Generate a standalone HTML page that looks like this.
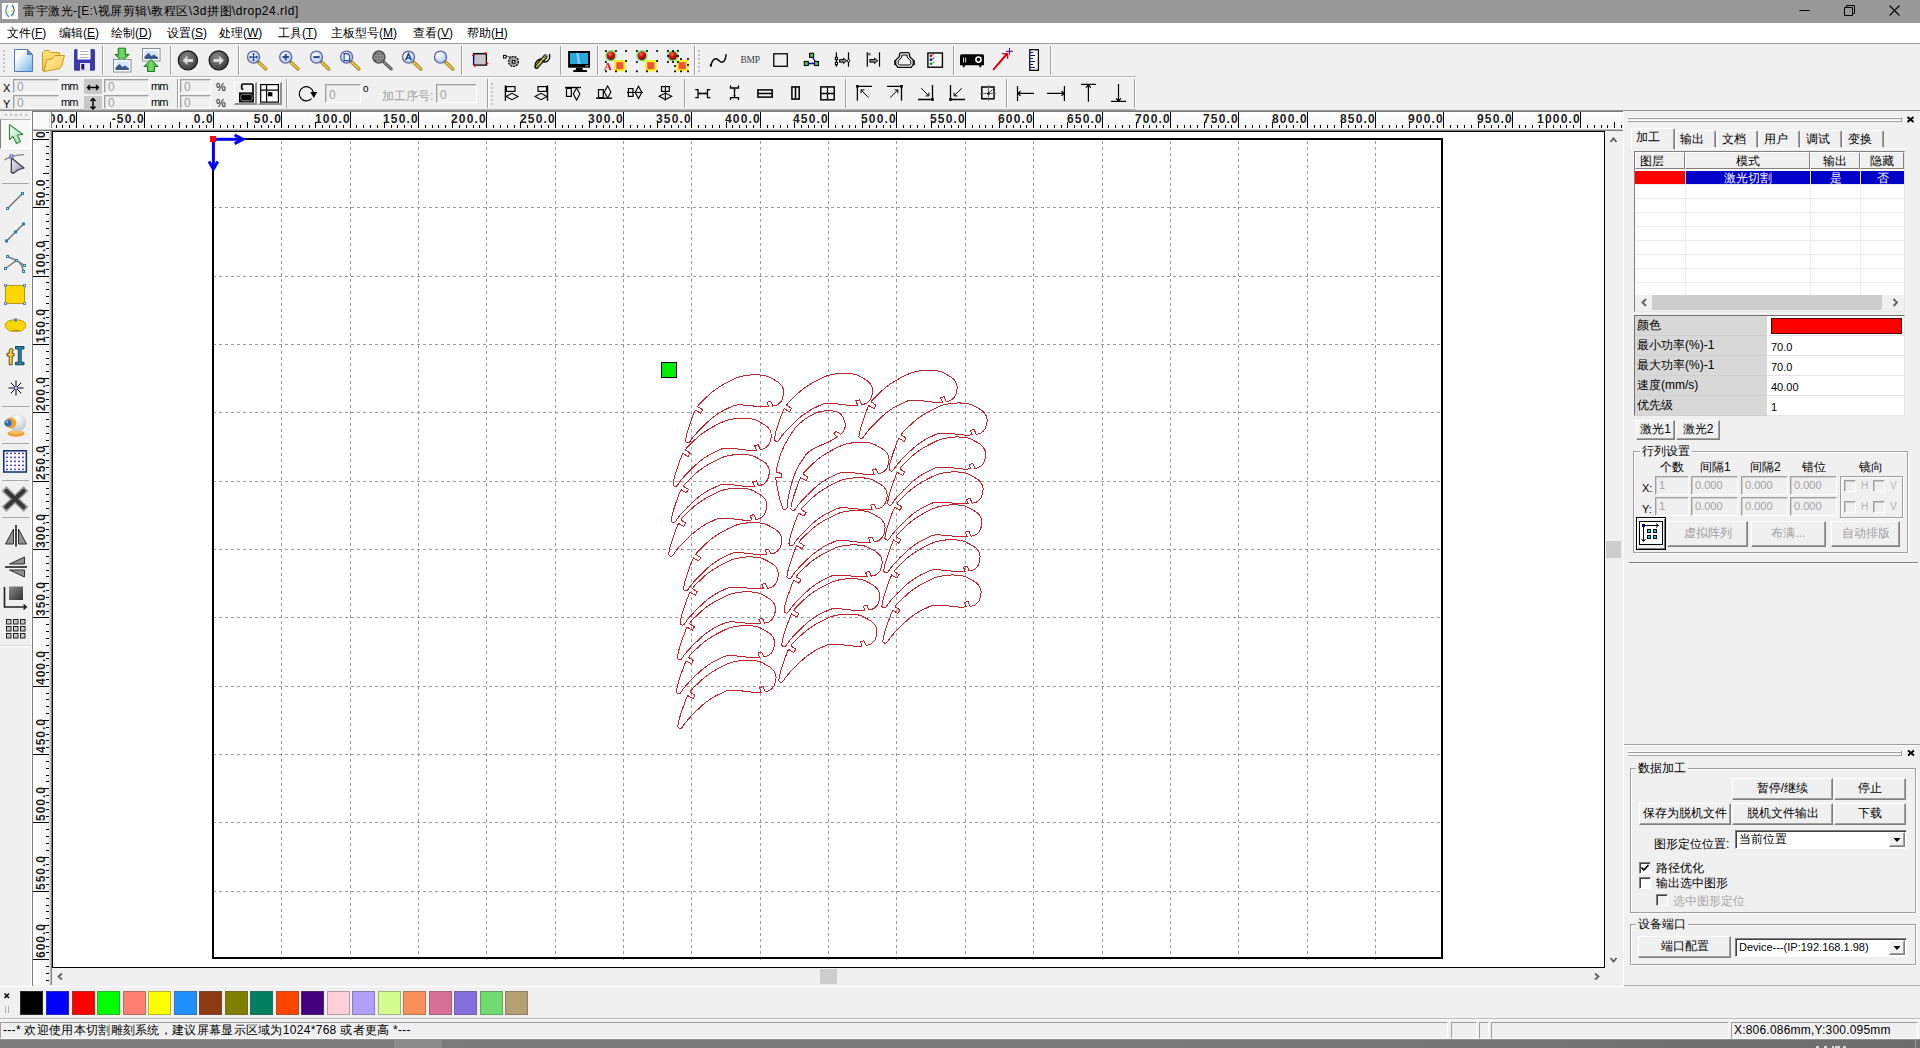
<!DOCTYPE html>
<html><head><meta charset="utf-8"><title>RDWorks</title><style>
html,body{margin:0;padding:0}
body{width:1920px;height:1048px;position:relative;overflow:hidden;background:#f0f0f0;font-family:"Liberation Sans",sans-serif;font-size:12px;color:#000}
body div{position:absolute;overflow:visible}
.t{white-space:nowrap}
.rl{font-weight:bold;font-size:12px;line-height:15px;letter-spacing:1.2px;color:#222;white-space:nowrap;text-align:right;margin-right:-1px}
.rv{font-weight:bold;font-size:12px;line-height:15px;letter-spacing:1.0px;color:#222;white-space:nowrap;transform-origin:0 0;transform:rotate(-90deg);height:15px}
svg{position:absolute;left:0;top:0;pointer-events:none}
u{text-decoration:underline}
</style></head>
<body>
<div style="left:0px;top:0px;width:1920px;height:23px;background:#999999"></div>
<div style="left:2px;top:3px;width:16px;height:16px;background:#fff"></div>
<div class="t" style="left:23px;top:3px;font-size:12px;line-height:16px;color:#000;letter-spacing:0.5px">雷宇激光-[E:\视屏剪辑\教程区\3d拼图\drop24.rld]</div>
<div style="left:0px;top:23px;width:1920px;height:20px;background:#ffffff"></div>
<div class="t" style="left:7px;top:25px;font-size:12px;line-height:16px;color:#000">文件(<u>F</u>)</div>
<div class="t" style="left:59px;top:25px;font-size:12px;line-height:16px;color:#000">编辑(<u>E</u>)</div>
<div class="t" style="left:111px;top:25px;font-size:12px;line-height:16px;color:#000">绘制(<u>D</u>)</div>
<div class="t" style="left:167px;top:25px;font-size:12px;line-height:16px;color:#000">设置(<u>S</u>)</div>
<div class="t" style="left:219px;top:25px;font-size:12px;line-height:16px;color:#000">处理(<u>W</u>)</div>
<div class="t" style="left:278px;top:25px;font-size:12px;line-height:16px;color:#000">工具(<u>T</u>)</div>
<div class="t" style="left:331px;top:25px;font-size:12px;line-height:16px;color:#000">主板型号(<u>M</u>)</div>
<div class="t" style="left:413px;top:25px;font-size:12px;line-height:16px;color:#000">查看(<u>V</u>)</div>
<div class="t" style="left:467px;top:25px;font-size:12px;line-height:16px;color:#000">帮助(<u>H</u>)</div>
<div style="left:0px;top:43px;width:1920px;height:1px;background:#a0a0a0"></div>
<div style="left:0px;top:76px;width:1136px;height:1px;background:#b9b9b9"></div>
<div style="left:0px;top:77px;width:1136px;height:1px;background:#ffffff"></div>
<div style="left:0px;top:109px;width:1136px;height:1px;background:#b4b4b4"></div>
<div style="left:0px;top:110px;width:1920px;height:1px;background:#929292"></div>
<div style="left:102px;top:46px;width:1px;height:29px;background:#a0a0a0"></div>
<div style="left:103px;top:46px;width:1px;height:29px;background:#ffffff"></div>
<div style="left:170px;top:46px;width:1px;height:29px;background:#a0a0a0"></div>
<div style="left:171px;top:46px;width:1px;height:29px;background:#ffffff"></div>
<div style="left:238px;top:46px;width:1px;height:29px;background:#a0a0a0"></div>
<div style="left:239px;top:46px;width:1px;height:29px;background:#ffffff"></div>
<div style="left:461px;top:46px;width:1px;height:29px;background:#a0a0a0"></div>
<div style="left:462px;top:46px;width:1px;height:29px;background:#ffffff"></div>
<div style="left:560px;top:46px;width:1px;height:29px;background:#a0a0a0"></div>
<div style="left:561px;top:46px;width:1px;height:29px;background:#ffffff"></div>
<div style="left:597px;top:46px;width:1px;height:29px;background:#a0a0a0"></div>
<div style="left:598px;top:46px;width:1px;height:29px;background:#ffffff"></div>
<div style="left:694px;top:46px;width:1px;height:29px;background:#a0a0a0"></div>
<div style="left:695px;top:46px;width:1px;height:29px;background:#ffffff"></div>
<div style="left:953px;top:46px;width:1px;height:29px;background:#a0a0a0"></div>
<div style="left:954px;top:46px;width:1px;height:29px;background:#ffffff"></div>
<div style="left:1050px;top:46px;width:1px;height:29px;background:#a0a0a0"></div>
<div style="left:1051px;top:46px;width:1px;height:29px;background:#ffffff"></div>
<div style="left:177px;top:79px;width:1px;height:29px;background:#a0a0a0"></div>
<div style="left:178px;top:79px;width:1px;height:29px;background:#ffffff"></div>
<div style="left:286px;top:79px;width:1px;height:29px;background:#a0a0a0"></div>
<div style="left:287px;top:79px;width:1px;height:29px;background:#ffffff"></div>
<div style="left:487px;top:79px;width:1px;height:29px;background:#a0a0a0"></div>
<div style="left:488px;top:79px;width:1px;height:29px;background:#ffffff"></div>
<div style="left:684px;top:79px;width:1px;height:29px;background:#a0a0a0"></div>
<div style="left:685px;top:79px;width:1px;height:29px;background:#ffffff"></div>
<div style="left:845px;top:79px;width:1px;height:29px;background:#a0a0a0"></div>
<div style="left:846px;top:79px;width:1px;height:29px;background:#ffffff"></div>
<div style="left:1006px;top:79px;width:1px;height:29px;background:#a0a0a0"></div>
<div style="left:1007px;top:79px;width:1px;height:29px;background:#ffffff"></div>
<div style="left:1134px;top:79px;width:1px;height:29px;background:#a0a0a0"></div>
<div style="left:1135px;top:79px;width:1px;height:29px;background:#ffffff"></div>
<div style="left:3px;top:50px;width:2px;height:2px;background:#c4c4c4"></div>
<div style="left:3px;top:54px;width:2px;height:2px;background:#c4c4c4"></div>
<div style="left:3px;top:58px;width:2px;height:2px;background:#c4c4c4"></div>
<div style="left:3px;top:62px;width:2px;height:2px;background:#c4c4c4"></div>
<div style="left:3px;top:66px;width:2px;height:2px;background:#c4c4c4"></div>
<div style="left:3px;top:70px;width:2px;height:2px;background:#c4c4c4"></div>
<div style="left:698px;top:50px;width:2px;height:2px;background:#c4c4c4"></div>
<div style="left:698px;top:54px;width:2px;height:2px;background:#c4c4c4"></div>
<div style="left:698px;top:58px;width:2px;height:2px;background:#c4c4c4"></div>
<div style="left:698px;top:62px;width:2px;height:2px;background:#c4c4c4"></div>
<div style="left:698px;top:66px;width:2px;height:2px;background:#c4c4c4"></div>
<div style="left:698px;top:70px;width:2px;height:2px;background:#c4c4c4"></div>
<div style="left:491px;top:83px;width:2px;height:2px;background:#c4c4c4"></div>
<div style="left:491px;top:87px;width:2px;height:2px;background:#c4c4c4"></div>
<div style="left:491px;top:91px;width:2px;height:2px;background:#c4c4c4"></div>
<div style="left:491px;top:95px;width:2px;height:2px;background:#c4c4c4"></div>
<div style="left:491px;top:99px;width:2px;height:2px;background:#c4c4c4"></div>
<div style="left:491px;top:103px;width:2px;height:2px;background:#c4c4c4"></div>
<div class="t" style="left:3px;top:81px;font-size:11px;line-height:14px">X</div>
<div class="t" style="left:3px;top:97px;font-size:11px;line-height:14px">Y</div>
<div style="left:13px;top:79px;width:46px;height:14px;background:#f0f0f0;border:1px solid;border-color:#a0a0a0 #fff #fff #a0a0a0;box-sizing:border-box;box-shadow:inset 1px 1px 0 #d4d4d4;color:#a0a0a0;font-size:12px;line-height:15px;padding-left:3px">0</div>
<div class="t" style="left:61px;top:79px;font-size:11px;line-height:14px;letter-spacing:-1px">mm</div>
<div style="left:104px;top:79px;width:45px;height:14px;background:#f0f0f0;border:1px solid;border-color:#a0a0a0 #fff #fff #a0a0a0;box-sizing:border-box;box-shadow:inset 1px 1px 0 #d4d4d4;color:#a0a0a0;font-size:12px;line-height:15px;padding-left:3px">0</div>
<div class="t" style="left:151px;top:79px;font-size:11px;line-height:14px;letter-spacing:-1px">mm</div>
<div style="left:180px;top:79px;width:31px;height:14px;background:#f0f0f0;border:1px solid;border-color:#a0a0a0 #fff #fff #a0a0a0;box-sizing:border-box;box-shadow:inset 1px 1px 0 #d4d4d4;color:#a0a0a0;font-size:12px;line-height:15px;padding-left:3px">0</div>
<div class="t" style="left:216px;top:80px;font-size:11px;line-height:14px">%</div>
<div style="left:13px;top:95px;width:46px;height:14px;background:#f0f0f0;border:1px solid;border-color:#a0a0a0 #fff #fff #a0a0a0;box-sizing:border-box;box-shadow:inset 1px 1px 0 #d4d4d4;color:#a0a0a0;font-size:12px;line-height:15px;padding-left:3px">0</div>
<div class="t" style="left:61px;top:95px;font-size:11px;line-height:14px;letter-spacing:-1px">mm</div>
<div style="left:104px;top:95px;width:45px;height:14px;background:#f0f0f0;border:1px solid;border-color:#a0a0a0 #fff #fff #a0a0a0;box-sizing:border-box;box-shadow:inset 1px 1px 0 #d4d4d4;color:#a0a0a0;font-size:12px;line-height:15px;padding-left:3px">0</div>
<div class="t" style="left:151px;top:95px;font-size:11px;line-height:14px;letter-spacing:-1px">mm</div>
<div style="left:180px;top:95px;width:31px;height:14px;background:#f0f0f0;border:1px solid;border-color:#a0a0a0 #fff #fff #a0a0a0;box-sizing:border-box;box-shadow:inset 1px 1px 0 #d4d4d4;color:#a0a0a0;font-size:12px;line-height:15px;padding-left:3px">0</div>
<div class="t" style="left:216px;top:96px;font-size:11px;line-height:14px">%</div>
<div style="left:84px;top:79px;width:18px;height:15px;background:#c8c8c8"></div>
<div style="left:84px;top:96px;width:18px;height:14px;background:#c8c8c8"></div>
<div style="left:234px;top:82px;width:23px;height:23px;background:#f0f0f0;box-sizing:border-box;border:solid;border-width:1px 2px 2px 1px;border-color:#fff #909090 #909090 #fff"></div>
<div style="left:258px;top:82px;width:24px;height:23px;background:#f0f0f0;box-sizing:border-box;border:solid;border-width:1px 2px 2px 1px;border-color:#fff #909090 #909090 #fff"></div>
<div style="left:325px;top:84px;width:36px;height:19px;background:#f0f0f0;border:1px solid;border-color:#a0a0a0 #fff #fff #a0a0a0;box-sizing:border-box;box-shadow:inset 1px 1px 0 #d4d4d4;color:#a0a0a0;font-size:12px;line-height:20px;padding-left:3px">0</div>
<div class="t" style="left:363px;top:82px;font-size:10px;line-height:14px">o</div>
<div class="t" style="left:382px;top:88px;font-size:12px;line-height:16px;color:#a0a0a0">加工序号:</div>
<div style="left:436px;top:84px;width:41px;height:19px;background:#f0f0f0;border:1px solid;border-color:#a0a0a0 #fff #fff #a0a0a0;box-sizing:border-box;box-shadow:inset 1px 1px 0 #d4d4d4;color:#a0a0a0;font-size:12px;line-height:20px;padding-left:3px">0</div>
<div style="left:31px;top:111px;width:1px;height:875px;background:#ffffff"></div>
<div style="left:32px;top:111px;width:1px;height:875px;background:#808080"></div>
<div style="left:33px;top:112px;width:16px;height:16px;background:#fafafa"></div>
<div style="left:32px;top:111px;width:1591px;height:1px;background:#7a7a7a"></div>
<div style="left:49px;top:112px;width:1px;height:17px;background:#dcdcdc"></div>
<div style="left:50px;top:112px;width:1px;height:17px;background:#ffffff"></div>
<div style="left:51px;top:112px;width:1px;height:17px;background:#808080"></div>
<div style="left:52px;top:112px;width:1570px;height:16px;background:linear-gradient(#ffffff,#f4f4f4)"></div>
<div style="left:33px;top:128px;width:1590px;height:1px;background:#ffffff"></div>
<div style="left:33px;top:129px;width:1590px;height:1px;background:#c0c0c0"></div>
<div style="left:33px;top:130px;width:1590px;height:1px;background:#7f7f7f"></div>
<div style="left:33px;top:131px;width:16px;height:854px;background:linear-gradient(90deg,#ffffff,#f4f4f4)"></div>
<div style="left:49px;top:131px;width:1px;height:854px;background:#e0e0e0"></div>
<div style="left:50px;top:131px;width:1px;height:854px;background:#c0c0c0"></div>
<div style="left:51px;top:131px;width:1px;height:854px;background:#7f7f7f"></div>
<div style="left:52px;top:111px;width:1570px;height:17px;overflow:hidden"><div class="rl" style="right:1546px;top:1px">-100.0</div><div class="rl" style="right:1478px;top:1px">-50.0</div><div class="rl" style="right:1409px;top:1px">0.0</div><div class="rl" style="right:1341px;top:1px">50.0</div><div class="rl" style="right:1272px;top:1px">100.0</div><div class="rl" style="right:1204px;top:1px">150.0</div><div class="rl" style="right:1136px;top:1px">200.0</div><div class="rl" style="right:1067px;top:1px">250.0</div><div class="rl" style="right:999px;top:1px">300.0</div><div class="rl" style="right:931px;top:1px">350.0</div><div class="rl" style="right:862px;top:1px">400.0</div><div class="rl" style="right:794px;top:1px">450.0</div><div class="rl" style="right:726px;top:1px">500.0</div><div class="rl" style="right:657px;top:1px">550.0</div><div class="rl" style="right:589px;top:1px">600.0</div><div class="rl" style="right:520px;top:1px">650.0</div><div class="rl" style="right:452px;top:1px">700.0</div><div class="rl" style="right:384px;top:1px">750.0</div><div class="rl" style="right:315px;top:1px">800.0</div><div class="rl" style="right:247px;top:1px">850.0</div><div class="rl" style="right:179px;top:1px">900.0</div><div class="rl" style="right:110px;top:1px">950.0</div><div class="rl" style="right:42px;top:1px">1000.0</div></div>
<div style="left:33px;top:131px;width:16px;height:854px;overflow:hidden"><div class="rv" style="left:1px;top:7px">0</div><div class="rv" style="left:1px;top:75px">50.0</div><div class="rv" style="left:1px;top:144px">100.0</div><div class="rv" style="left:1px;top:212px">150.0</div><div class="rv" style="left:1px;top:280px">200.0</div><div class="rv" style="left:1px;top:349px">250.0</div><div class="rv" style="left:1px;top:417px">300.0</div><div class="rv" style="left:1px;top:485px">350.0</div><div class="rv" style="left:1px;top:554px">400.0</div><div class="rv" style="left:1px;top:622px">450.0</div><div class="rv" style="left:1px;top:690px">500.0</div><div class="rv" style="left:1px;top:759px">550.0</div><div class="rv" style="left:1px;top:827px">600.0</div></div>
<div style="left:52px;top:131px;width:1553px;height:837px;background:#fff;border:1px solid #000;box-sizing:border-box"></div>
<div style="left:1605px;top:131px;width:17px;height:837px;background:#f0f0f0"></div>
<div style="left:1606px;top:541px;width:15px;height:17px;background:#cdcdcd"></div>
<div style="left:52px;top:968px;width:1570px;height:17px;background:#f0f0f0"></div>
<div style="left:820px;top:969px;width:17px;height:15px;background:#cdcdcd"></div>
<div style="left:0px;top:986px;width:1623px;height:1px;background:#ffffff"></div>
<div style="left:1623px;top:111px;width:1px;height:875px;background:#ffffff"></div>
<div style="left:1628px;top:117px;width:273px;height:1px;background:#ffffff"></div>
<div style="left:1628px;top:118px;width:273px;height:1px;background:#a0a0a0"></div>
<div style="left:1628px;top:120px;width:273px;height:1px;background:#ffffff"></div>
<div style="left:1628px;top:121px;width:273px;height:1px;background:#a0a0a0"></div>
<div style="left:1901px;top:117px;width:1px;height:5px;background:#a0a0a0"></div>
<div style="left:1631px;top:128px;width:44px;height:22px;background:#f0f0f0;box-sizing:border-box;border:1px solid;border-color:#fff #808080 #f0f0f0 #fff;border-radius:2px 2px 0 0;box-shadow:inset -1px 0 0 #a0a0a0"></div>
<div class="t" style="left:1636px;top:129px;font-size:12px;line-height:16px">加工</div>
<div style="left:1675px;top:130px;width:41px;height:18px;background:#f0f0f0;box-sizing:border-box;border:1px solid;border-color:#fff #808080 #f0f0f0 #fff;border-radius:2px 2px 0 0;box-shadow:inset -1px 0 0 #a0a0a0"></div>
<div class="t" style="left:1680px;top:131px;font-size:12px;line-height:16px">输出</div>
<div style="left:1717px;top:130px;width:41px;height:18px;background:#f0f0f0;box-sizing:border-box;border:1px solid;border-color:#fff #808080 #f0f0f0 #fff;border-radius:2px 2px 0 0;box-shadow:inset -1px 0 0 #a0a0a0"></div>
<div class="t" style="left:1722px;top:131px;font-size:12px;line-height:16px">文档</div>
<div style="left:1759px;top:130px;width:41px;height:18px;background:#f0f0f0;box-sizing:border-box;border:1px solid;border-color:#fff #808080 #f0f0f0 #fff;border-radius:2px 2px 0 0;box-shadow:inset -1px 0 0 #a0a0a0"></div>
<div class="t" style="left:1764px;top:131px;font-size:12px;line-height:16px">用户</div>
<div style="left:1801px;top:130px;width:41px;height:18px;background:#f0f0f0;box-sizing:border-box;border:1px solid;border-color:#fff #808080 #f0f0f0 #fff;border-radius:2px 2px 0 0;box-shadow:inset -1px 0 0 #a0a0a0"></div>
<div class="t" style="left:1806px;top:131px;font-size:12px;line-height:16px">调试</div>
<div style="left:1843px;top:130px;width:41px;height:18px;background:#f0f0f0;box-sizing:border-box;border:1px solid;border-color:#fff #808080 #f0f0f0 #fff;border-radius:2px 2px 0 0;box-shadow:inset -1px 0 0 #a0a0a0"></div>
<div class="t" style="left:1848px;top:131px;font-size:12px;line-height:16px">变换</div>
<div style="left:1675px;top:148px;width:232px;height:1px;background:#ffffff"></div>
<div style="left:1634px;top:151px;width:271px;height:161px;background:#fff;box-sizing:border-box;border:1px solid;border-color:#808080 #e8e8e8 #e8e8e8 #808080"></div>
<div style="left:1635px;top:152px;width:50px;height:17px;background:#f0f0f0;box-sizing:border-box;border:1px solid;border-color:#fff #808080 #808080 #fff;font-size:12px;line-height:16px;text-align:left;padding-left:4px;">图层</div>
<div style="left:1685px;top:152px;width:125px;height:17px;background:#f0f0f0;box-sizing:border-box;border:1px solid;border-color:#fff #808080 #808080 #fff;font-size:12px;line-height:16px;text-align:center;">模式</div>
<div style="left:1810px;top:152px;width:50px;height:17px;background:#f0f0f0;box-sizing:border-box;border:1px solid;border-color:#fff #808080 #808080 #fff;font-size:12px;line-height:16px;text-align:center;">输出</div>
<div style="left:1860px;top:152px;width:44px;height:17px;background:#f0f0f0;box-sizing:border-box;border:1px solid;border-color:#fff #808080 #808080 #fff;font-size:12px;line-height:16px;text-align:center;">隐藏</div>
<div style="left:1635px;top:184px;width:269px;height:1px;background:#ececec"></div>
<div style="left:1635px;top:198px;width:269px;height:1px;background:#ececec"></div>
<div style="left:1635px;top:212px;width:269px;height:1px;background:#ececec"></div>
<div style="left:1635px;top:226px;width:269px;height:1px;background:#ececec"></div>
<div style="left:1635px;top:240px;width:269px;height:1px;background:#ececec"></div>
<div style="left:1635px;top:254px;width:269px;height:1px;background:#ececec"></div>
<div style="left:1635px;top:268px;width:269px;height:1px;background:#ececec"></div>
<div style="left:1635px;top:282px;width:269px;height:1px;background:#ececec"></div>
<div style="left:1635px;top:296px;width:269px;height:1px;background:#ececec"></div>
<div style="left:1685px;top:169px;width:1px;height:126px;background:#ececec"></div>
<div style="left:1810px;top:169px;width:1px;height:126px;background:#ececec"></div>
<div style="left:1860px;top:169px;width:1px;height:126px;background:#ececec"></div>
<div style="left:1635px;top:171px;width:50px;height:13px;background:#ff0000"></div>
<div style="left:1686px;top:171px;width:124px;height:13px;background:#0000c8;color:#fff;font-size:12px;line-height:14px;text-align:center;overflow:hidden">激光切割</div>
<div style="left:1811px;top:171px;width:49px;height:13px;background:#0000c8;color:#fff;font-size:12px;line-height:14px;text-align:center;overflow:hidden">是</div>
<div style="left:1861px;top:171px;width:43px;height:13px;background:#0000c8;color:#fff;font-size:12px;line-height:14px;text-align:center;overflow:hidden">否</div>
<div style="left:1635px;top:295px;width:269px;height:16px;background:#f0f0f0"></div>
<div style="left:1652px;top:295px;width:230px;height:15px;background:#cdcdcd"></div>
<div style="left:1634px;top:315px;width:271px;height:101px;background:#fff;box-sizing:border-box;border:1px solid;border-color:#707070 #e8e8e8 #e8e8e8 #707070"></div>
<div style="left:1635px;top:316px;width:132px;height:19px;background:#d8d8d8;font-size:12px;line-height:19px;padding-left:2px;box-sizing:border-box;white-space:nowrap">颜色</div>
<div style="left:1635px;top:335px;width:132px;height:1px;background:#d0d0d0"></div>
<div style="left:1768px;top:335px;width:136px;height:1px;background:#e4e4e4"></div>
<div style="left:1635px;top:336px;width:132px;height:19px;background:#d8d8d8;font-size:12px;line-height:19px;padding-left:2px;box-sizing:border-box;white-space:nowrap">最小功率(%)-1</div>
<div style="left:1635px;top:355px;width:132px;height:1px;background:#d0d0d0"></div>
<div style="left:1768px;top:355px;width:136px;height:1px;background:#e4e4e4"></div>
<div class="t" style="left:1771px;top:340px;font-size:11px;line-height:14px">70.0</div>
<div style="left:1635px;top:356px;width:132px;height:19px;background:#d8d8d8;font-size:12px;line-height:19px;padding-left:2px;box-sizing:border-box;white-space:nowrap">最大功率(%)-1</div>
<div style="left:1635px;top:375px;width:132px;height:1px;background:#d0d0d0"></div>
<div style="left:1768px;top:375px;width:136px;height:1px;background:#e4e4e4"></div>
<div class="t" style="left:1771px;top:360px;font-size:11px;line-height:14px">70.0</div>
<div style="left:1635px;top:376px;width:132px;height:19px;background:#d8d8d8;font-size:12px;line-height:19px;padding-left:2px;box-sizing:border-box;white-space:nowrap">速度(mm/s)</div>
<div style="left:1635px;top:395px;width:132px;height:1px;background:#d0d0d0"></div>
<div style="left:1768px;top:395px;width:136px;height:1px;background:#e4e4e4"></div>
<div class="t" style="left:1771px;top:380px;font-size:11px;line-height:14px">40.00</div>
<div style="left:1635px;top:396px;width:132px;height:19px;background:#d8d8d8;font-size:12px;line-height:19px;padding-left:2px;box-sizing:border-box;white-space:nowrap">优先级</div>
<div style="left:1635px;top:415px;width:132px;height:1px;background:#d0d0d0"></div>
<div style="left:1768px;top:415px;width:136px;height:1px;background:#e4e4e4"></div>
<div class="t" style="left:1771px;top:400px;font-size:11px;line-height:14px">1</div>
<div style="left:1771px;top:318px;width:131px;height:16px;background:#ff0000;box-sizing:border-box;border:1px solid #500000"></div>
<div style="left:1636px;top:420px;width:39px;height:20px;background:#f0f0f0;box-sizing:border-box;border:1px solid;border-color:#fff #808080 #808080 #fff;box-shadow:inset -1px -1px 0 #a0a0a0;text-align:center;font-size:12px;line-height:17px;color:#000;white-space:nowrap;overflow:hidden">激光1</div>
<div style="left:1676px;top:420px;width:44px;height:20px;background:#f0f0f0;box-sizing:border-box;border:1px solid;border-color:#fff #808080 #808080 #fff;box-shadow:inset -1px -1px 0 #a0a0a0;text-align:center;font-size:12px;line-height:17px;color:#000;white-space:nowrap;overflow:hidden">激光2</div>
<div style="left:1633px;top:451px;width:275px;height:102px;box-sizing:border-box;border:1px solid #a0a0a0;box-shadow:inset 1px 1px 0 #fff, 1px 1px 0 #fff"></div>
<div class="t" style="left:1640px;top:444px;font-size:12px;line-height:14px;background:#f0f0f0;padding:0 2px">行列设置</div>
<div class="t" style="left:1660px;top:460px;font-size:12px;line-height:14px">个数</div>
<div class="t" style="left:1700px;top:460px;font-size:12px;line-height:14px">间隔1</div>
<div class="t" style="left:1750px;top:460px;font-size:12px;line-height:14px">间隔2</div>
<div class="t" style="left:1802px;top:460px;font-size:12px;line-height:14px">错位</div>
<div class="t" style="left:1859px;top:460px;font-size:12px;line-height:14px">镜向</div>
<div class="t" style="left:1642px;top:481px;font-size:11px;line-height:14px">X:</div>
<div class="t" style="left:1642px;top:502px;font-size:11px;line-height:14px">Y:</div>
<div style="left:1655px;top:476px;width:34px;height:19px;background:#f0f0f0;box-sizing:border-box;border:1px solid;border-color:#a0a0a0 #fff #fff #a0a0a0;box-shadow:inset 1px 1px 0 #d0d0d0;color:#a0a0a0;font-size:11px;line-height:17px;padding-left:3px">1</div>
<div style="left:1691px;top:476px;width:47px;height:19px;background:#f0f0f0;box-sizing:border-box;border:1px solid;border-color:#a0a0a0 #fff #fff #a0a0a0;box-shadow:inset 1px 1px 0 #d0d0d0;color:#a0a0a0;font-size:11px;line-height:17px;padding-left:3px">0.000</div>
<div style="left:1741px;top:476px;width:47px;height:19px;background:#f0f0f0;box-sizing:border-box;border:1px solid;border-color:#a0a0a0 #fff #fff #a0a0a0;box-shadow:inset 1px 1px 0 #d0d0d0;color:#a0a0a0;font-size:11px;line-height:17px;padding-left:3px">0.000</div>
<div style="left:1790px;top:476px;width:47px;height:19px;background:#f0f0f0;box-sizing:border-box;border:1px solid;border-color:#a0a0a0 #fff #fff #a0a0a0;box-shadow:inset 1px 1px 0 #d0d0d0;color:#a0a0a0;font-size:11px;line-height:17px;padding-left:3px">0.000</div>
<div style="left:1655px;top:497px;width:34px;height:19px;background:#f0f0f0;box-sizing:border-box;border:1px solid;border-color:#a0a0a0 #fff #fff #a0a0a0;box-shadow:inset 1px 1px 0 #d0d0d0;color:#a0a0a0;font-size:11px;line-height:17px;padding-left:3px">1</div>
<div style="left:1691px;top:497px;width:47px;height:19px;background:#f0f0f0;box-sizing:border-box;border:1px solid;border-color:#a0a0a0 #fff #fff #a0a0a0;box-shadow:inset 1px 1px 0 #d0d0d0;color:#a0a0a0;font-size:11px;line-height:17px;padding-left:3px">0.000</div>
<div style="left:1741px;top:497px;width:47px;height:19px;background:#f0f0f0;box-sizing:border-box;border:1px solid;border-color:#a0a0a0 #fff #fff #a0a0a0;box-shadow:inset 1px 1px 0 #d0d0d0;color:#a0a0a0;font-size:11px;line-height:17px;padding-left:3px">0.000</div>
<div style="left:1790px;top:497px;width:47px;height:19px;background:#f0f0f0;box-sizing:border-box;border:1px solid;border-color:#a0a0a0 #fff #fff #a0a0a0;box-shadow:inset 1px 1px 0 #d0d0d0;color:#a0a0a0;font-size:11px;line-height:17px;padding-left:3px">0.000</div>
<div style="left:1840px;top:476px;width:63px;height:42px;box-sizing:border-box;border:1px solid #a0a0a0;box-shadow:inset 1px 1px 0 #fff,1px 1px 0 #fff"></div>
<div style="left:1844px;top:480px;width:12px;height:12px;background:#f0f0f0;box-sizing:border-box;border:1px solid;border-color:#a0a0a0 #fff #fff #a0a0a0;box-shadow:inset 1px 1px 0 #c8c8c8"></div>
<div class="t" style="left:1861px;top:479px;font-size:10px;line-height:14px;color:#b4b4b4">H</div>
<div style="left:1873px;top:480px;width:12px;height:12px;background:#f0f0f0;box-sizing:border-box;border:1px solid;border-color:#a0a0a0 #fff #fff #a0a0a0;box-shadow:inset 1px 1px 0 #c8c8c8"></div>
<div class="t" style="left:1890px;top:479px;font-size:10px;line-height:14px;color:#b4b4b4">V</div>
<div style="left:1844px;top:501px;width:12px;height:12px;background:#f0f0f0;box-sizing:border-box;border:1px solid;border-color:#a0a0a0 #fff #fff #a0a0a0;box-shadow:inset 1px 1px 0 #c8c8c8"></div>
<div class="t" style="left:1861px;top:500px;font-size:10px;line-height:14px;color:#b4b4b4">H</div>
<div style="left:1873px;top:501px;width:12px;height:12px;background:#f0f0f0;box-sizing:border-box;border:1px solid;border-color:#a0a0a0 #fff #fff #a0a0a0;box-shadow:inset 1px 1px 0 #c8c8c8"></div>
<div class="t" style="left:1890px;top:500px;font-size:10px;line-height:14px;color:#b4b4b4">V</div>
<div style="left:1636px;top:517px;width:30px;height:33px;background:#f0f0f0;box-sizing:border-box;border:1px solid #000;box-shadow:inset 1px 1px 0 #fff, inset -1px -1px 0 #808080"></div>
<div style="left:1639px;top:521px;width:24px;height:24px;background:#fff;box-sizing:border-box;border:1px solid #000"></div>
<div style="left:1667px;top:521px;width:81px;height:26px;background:#f0f0f0;box-sizing:border-box;border:1px solid;border-color:#fff #808080 #808080 #fff;box-shadow:inset -1px -1px 0 #a0a0a0;text-align:center;font-size:12px;line-height:23px;color:#a0a0a0;white-space:nowrap;overflow:hidden">虚拟阵列</div>
<div style="left:1751px;top:521px;width:75px;height:26px;background:#f0f0f0;box-sizing:border-box;border:1px solid;border-color:#fff #808080 #808080 #fff;box-shadow:inset -1px -1px 0 #a0a0a0;text-align:center;font-size:12px;line-height:23px;color:#a0a0a0;white-space:nowrap;overflow:hidden">布满...</div>
<div style="left:1831px;top:521px;width:69px;height:26px;background:#f0f0f0;box-sizing:border-box;border:1px solid;border-color:#fff #808080 #808080 #fff;box-shadow:inset -1px -1px 0 #a0a0a0;text-align:center;font-size:12px;line-height:23px;color:#a0a0a0;white-space:nowrap;overflow:hidden">自动排版</div>
<div style="left:1629px;top:562px;width:289px;height:1px;background:#808080"></div>
<div style="left:1629px;top:563px;width:289px;height:1px;background:#ffffff"></div>
<div style="left:1624px;top:744px;width:296px;height:1px;background:#a0a0a0"></div>
<div style="left:1624px;top:745px;width:296px;height:1px;background:#ffffff"></div>
<div style="left:1628px;top:751px;width:273px;height:1px;background:#ffffff"></div>
<div style="left:1628px;top:752px;width:273px;height:1px;background:#a0a0a0"></div>
<div style="left:1628px;top:754px;width:273px;height:1px;background:#ffffff"></div>
<div style="left:1628px;top:755px;width:273px;height:1px;background:#a0a0a0"></div>
<div style="left:1901px;top:751px;width:1px;height:5px;background:#a0a0a0"></div>
<div style="left:1630px;top:768px;width:286px;height:145px;box-sizing:border-box;border:1px solid #a0a0a0;box-shadow:inset 1px 1px 0 #fff, 1px 1px 0 #fff"></div>
<div class="t" style="left:1636px;top:761px;font-size:12px;line-height:14px;background:#f0f0f0;padding:0 2px">数据加工</div>
<div style="left:1732px;top:778px;width:101px;height:22px;background:#f0f0f0;box-sizing:border-box;border:1px solid;border-color:#fff #808080 #808080 #fff;box-shadow:inset -1px -1px 0 #a0a0a0;text-align:center;font-size:12px;line-height:19px;color:#000;white-space:nowrap;overflow:hidden">暂停/继续</div>
<div style="left:1834px;top:778px;width:72px;height:22px;background:#f0f0f0;box-sizing:border-box;border:1px solid;border-color:#fff #808080 #808080 #fff;box-shadow:inset -1px -1px 0 #a0a0a0;text-align:center;font-size:12px;line-height:19px;color:#000;white-space:nowrap;overflow:hidden">停止</div>
<div style="left:1639px;top:803px;width:92px;height:22px;background:#f0f0f0;box-sizing:border-box;border:1px solid;border-color:#fff #808080 #808080 #fff;box-shadow:inset -1px -1px 0 #a0a0a0;text-align:center;font-size:12px;line-height:19px;color:#000;white-space:nowrap;overflow:hidden">保存为脱机文件</div>
<div style="left:1732px;top:803px;width:101px;height:22px;background:#f0f0f0;box-sizing:border-box;border:1px solid;border-color:#fff #808080 #808080 #fff;box-shadow:inset -1px -1px 0 #a0a0a0;text-align:center;font-size:12px;line-height:19px;color:#000;white-space:nowrap;overflow:hidden">脱机文件输出</div>
<div style="left:1834px;top:803px;width:72px;height:22px;background:#f0f0f0;box-sizing:border-box;border:1px solid;border-color:#fff #808080 #808080 #fff;box-shadow:inset -1px -1px 0 #a0a0a0;text-align:center;font-size:12px;line-height:19px;color:#000;white-space:nowrap;overflow:hidden">下载</div>
<div class="t" style="left:1654px;top:836px;font-size:12px;line-height:16px">图形定位位置:</div>
<div style="left:1735px;top:830px;width:172px;height:19px;background:#fff;box-sizing:border-box;border:1px solid;border-color:#808080 #fff #fff #808080;box-shadow:inset 1px 1px 0 #404040;font-size:12px;line-height:16px;padding-left:3px;white-space:nowrap">当前位置</div>
<div style="left:1889px;top:832px;width:16px;height:15px;background:#f0f0f0;box-sizing:border-box;border:1px solid;border-color:#fff #808080 #808080 #fff;box-shadow:inset -1px -1px 0 #a0a0a0"></div>
<div style="left:1639px;top:862px;width:12px;height:12px;background:#fff;box-sizing:border-box;border:1px solid;border-color:#808080 #fff #fff #808080;box-shadow:inset 1px 1px 0 #404040"></div>
<div class="t" style="left:1656px;top:860px;font-size:12px;line-height:16px">路径优化</div>
<div style="left:1639px;top:877px;width:12px;height:12px;background:#fff;box-sizing:border-box;border:1px solid;border-color:#808080 #fff #fff #808080;box-shadow:inset 1px 1px 0 #404040"></div>
<div class="t" style="left:1656px;top:875px;font-size:12px;line-height:16px">输出选中图形</div>
<div style="left:1656px;top:894px;width:12px;height:12px;background:#f0f0f0;box-sizing:border-box;border:1px solid;border-color:#808080 #fff #fff #808080;box-shadow:inset 1px 1px 0 #404040"></div>
<div class="t" style="left:1673px;top:893px;font-size:12px;line-height:16px;color:#a8a8a8">选中图形定位</div>
<div style="left:1630px;top:924px;width:286px;height:41px;box-sizing:border-box;border:1px solid #a0a0a0;box-shadow:inset 1px 1px 0 #fff, 1px 1px 0 #fff"></div>
<div class="t" style="left:1636px;top:917px;font-size:12px;line-height:14px;background:#f0f0f0;padding:0 2px">设备端口</div>
<div style="left:1638px;top:936px;width:93px;height:22px;background:#f0f0f0;box-sizing:border-box;border:1px solid;border-color:#fff #808080 #808080 #fff;box-shadow:inset -1px -1px 0 #a0a0a0;text-align:center;font-size:12px;line-height:19px;color:#000;white-space:nowrap;overflow:hidden">端口配置</div>
<div style="left:1735px;top:938px;width:172px;height:19px;background:#fff;box-sizing:border-box;border:1px solid;border-color:#808080 #fff #fff #808080;box-shadow:inset 1px 1px 0 #404040;font-size:11px;line-height:16px;padding-left:3px;white-space:nowrap">Device---(IP:192.168.1.98)</div>
<div style="left:1889px;top:940px;width:16px;height:15px;background:#f0f0f0;box-sizing:border-box;border:1px solid;border-color:#fff #808080 #808080 #fff;box-shadow:inset -1px -1px 0 #a0a0a0"></div>
<div style="left:1624px;top:985px;width:296px;height:1px;background:#b4b4b4"></div>
<div style="left:20px;top:991px;width:23px;height:24px;background:#000000;box-sizing:border-box;border:1px solid rgba(90,90,90,0.45)"></div>
<div style="left:46px;top:991px;width:23px;height:24px;background:#0000ff;box-sizing:border-box;border:1px solid rgba(90,90,90,0.45)"></div>
<div style="left:72px;top:991px;width:23px;height:24px;background:#ff0000;box-sizing:border-box;border:1px solid rgba(90,90,90,0.45)"></div>
<div style="left:97px;top:991px;width:23px;height:24px;background:#00ff00;box-sizing:border-box;border:1px solid rgba(90,90,90,0.45)"></div>
<div style="left:123px;top:991px;width:23px;height:24px;background:#ff8072;box-sizing:border-box;border:1px solid rgba(90,90,90,0.45)"></div>
<div style="left:148px;top:991px;width:23px;height:24px;background:#ffff00;box-sizing:border-box;border:1px solid rgba(90,90,90,0.45)"></div>
<div style="left:174px;top:991px;width:23px;height:24px;background:#1e90ff;box-sizing:border-box;border:1px solid rgba(90,90,90,0.45)"></div>
<div style="left:199px;top:991px;width:23px;height:24px;background:#8b3a14;box-sizing:border-box;border:1px solid rgba(90,90,90,0.45)"></div>
<div style="left:225px;top:991px;width:23px;height:24px;background:#808000;box-sizing:border-box;border:1px solid rgba(90,90,90,0.45)"></div>
<div style="left:250px;top:991px;width:23px;height:24px;background:#008060;box-sizing:border-box;border:1px solid rgba(90,90,90,0.45)"></div>
<div style="left:276px;top:991px;width:23px;height:24px;background:#ff4500;box-sizing:border-box;border:1px solid rgba(90,90,90,0.45)"></div>
<div style="left:301px;top:991px;width:23px;height:24px;background:#400080;box-sizing:border-box;border:1px solid rgba(90,90,90,0.45)"></div>
<div style="left:327px;top:991px;width:23px;height:24px;background:#ffd0d8;box-sizing:border-box;border:1px solid rgba(90,90,90,0.45)"></div>
<div style="left:352px;top:991px;width:23px;height:24px;background:#b0a0fa;box-sizing:border-box;border:1px solid rgba(90,90,90,0.45)"></div>
<div style="left:378px;top:991px;width:23px;height:24px;background:#d4ff90;box-sizing:border-box;border:1px solid rgba(90,90,90,0.45)"></div>
<div style="left:403px;top:991px;width:23px;height:24px;background:#fa9058;box-sizing:border-box;border:1px solid rgba(90,90,90,0.45)"></div>
<div style="left:429px;top:991px;width:23px;height:24px;background:#d87096;box-sizing:border-box;border:1px solid rgba(90,90,90,0.45)"></div>
<div style="left:454px;top:991px;width:23px;height:24px;background:#8470dc;box-sizing:border-box;border:1px solid rgba(90,90,90,0.45)"></div>
<div style="left:480px;top:991px;width:23px;height:24px;background:#70dc70;box-sizing:border-box;border:1px solid rgba(90,90,90,0.45)"></div>
<div style="left:505px;top:991px;width:23px;height:24px;background:#b4a070;box-sizing:border-box;border:1px solid rgba(90,90,90,0.45)"></div>
<div style="left:0px;top:1018px;width:1920px;height:1px;background:#b9b9b9"></div>
<div style="left:0px;top:1019px;width:1920px;height:1px;background:#ffffff"></div>
<div style="left:0px;top:1022px;width:1448px;height:17px;box-sizing:border-box;border:1px solid;border-color:#a0a0a0 #fff #fff #a0a0a0;font-size:12px;line-height:15px;padding-left:2px;white-space:nowrap;letter-spacing:0.3px">---* 欢迎使用本切割雕刻系统，建议屏幕显示区域为1024*768 或者更高 *---</div>
<div style="left:1451px;top:1022px;width:26px;height:17px;box-sizing:border-box;border:1px solid;border-color:#a0a0a0 #fff #fff #a0a0a0;font-size:12px;line-height:15px;padding-left:2px;white-space:nowrap"></div>
<div style="left:1479px;top:1022px;width:10px;height:17px;box-sizing:border-box;border:1px solid;border-color:#a0a0a0 #fff #fff #a0a0a0;font-size:12px;line-height:15px;padding-left:2px;white-space:nowrap"></div>
<div style="left:1491px;top:1022px;width:238px;height:17px;box-sizing:border-box;border:1px solid;border-color:#a0a0a0 #fff #fff #a0a0a0;font-size:12px;line-height:15px;padding-left:2px;white-space:nowrap"></div>
<div style="left:1731px;top:1022px;width:187px;height:17px;box-sizing:border-box;border:1px solid;border-color:#a0a0a0 #fff #fff #a0a0a0;font-size:12px;line-height:15px;padding-left:2px;white-space:nowrap;letter-spacing:0.2px">X:806.086mm,Y:300.095mm</div>
<div style="left:0px;top:1039px;width:1920px;height:9px;background:linear-gradient(90deg,#7c7c7c,#7a7a7a 60%,#6c6c6c)"></div>
<div style="left:0px;top:1039px;width:1920px;height:1px;background:#8e8e8e"></div>
<div style="left:394px;top:1040px;width:48px;height:8px;background:#8c8c8c"></div>
<div style="left:1915px;top:1040px;width:1px;height:8px;background:#9a9a9a"></div>
<div style="left:1816px;top:1046px;width:3px;height:2px;background:#d8d8d8"></div>
<div style="left:1824px;top:1046px;width:3px;height:2px;background:#d8d8d8"></div>
<div style="left:1832px;top:1046px;width:2px;height:2px;background:#d8d8d8"></div>
<div style="left:1835px;top:1046px;width:5px;height:2px;background:#d8d8d8"></div>
<div style="left:1843px;top:1046px;width:3px;height:2px;background:#d8d8d8"></div>
<div class="t" style="left:604px;top:61px;font-family:'Liberation Serif',serif;font-weight:bold;font-size:11px;line-height:11px;color:#e01020">A</div>
<div class="t" style="left:740.5px;top:55px;font-family:'Liberation Serif',serif;font-size:9.5px;line-height:11px;color:#383838;letter-spacing:-0.3px">BMP</div>
<div style="left:5px;top:114px;width:2px;height:2px;background:#c0c0c0"></div>
<div style="left:10px;top:114px;width:2px;height:2px;background:#c0c0c0"></div>
<div style="left:15px;top:114px;width:2px;height:2px;background:#c0c0c0"></div>
<div style="left:20px;top:114px;width:2px;height:2px;background:#c0c0c0"></div>
<div style="left:25px;top:114px;width:2px;height:2px;background:#c0c0c0"></div>
<div style="left:0px;top:119px;width:31px;height:30px;background:#f8f8f8;box-sizing:border-box;border:1px solid;border-color:#b8b8b8 #fff #fff #808080"></div>
<div style="left:2px;top:183px;width:27px;height:1px;background:#a8a8a8"></div>
<div style="left:2px;top:406px;width:27px;height:1px;background:#a8a8a8"></div>
<div style="left:2px;top:443px;width:27px;height:1px;background:#a8a8a8"></div>
<div style="left:2px;top:480px;width:27px;height:1px;background:#a8a8a8"></div>
<div style="left:2px;top:517px;width:27px;height:1px;background:#a8a8a8"></div>
<div style="left:0px;top:645px;width:31px;height:1px;background:#d8d8d8"></div>
<div style="left:0px;top:646px;width:31px;height:1px;background:#ffffff"></div>
<svg width="1920" height="1048" viewBox="0 0 1920 1048">
<path d="M1799.5 10.5H1809.5" stroke="#000" stroke-width="1" fill="none"/>
<path d="M1844.5 7.5H1852.5V15.5H1844.5Z M1846.5 7.5V5.5H1854.5V13.5H1852.5" stroke="#000" stroke-width="1" fill="none"/>
<path d="M1889.5 5.5L1899.5 15.5M1899.5 5.5L1889.5 15.5" stroke="#000" stroke-width="1.1" fill="none"/>
<path d="M8 5C5 8 5 14 9 17" stroke="#3b9fc9" stroke-width="1.3" fill="none"/><path d="M12 5C15 8 15 13 11 16" stroke="#2f6fb5" stroke-width="1.3" fill="none"/><path d="M4 15L9 11L10 12L16 7L12 12L11 11Z" fill="#f5c033"/>
<path d="M87.5 87.5H98.5M90 85L87.5 87.5L90 90M96 85L98.5 87.5L96 90" stroke="#000" stroke-width="1.4" fill="none"/>
<path d="M93 98.5V109M90.5 101L93 98.5L95.5 101M90.5 106.5L93 109L95.5 106.5" stroke="#000" stroke-width="1.4" fill="none"/>
<path d="M56.5 125V128M62.5 125V128M69.5 125V128M76.5 112V128M83.5 125V128M90.5 125V128M97.5 125V128M103.5 125V128M110.5 122V128M117.5 125V128M124.5 125V128M131.5 125V128M138.5 125V128M144.5 112V128M151.5 125V128M158.5 125V128M165.5 125V128M172.5 125V128M179.5 122V128M186.5 125V128M192.5 125V128M199.5 125V128M206.5 125V128M213.5 112V128M220.5 125V128M227.5 125V128M233.5 125V128M240.5 125V128M247.5 122V128M254.5 125V128M261.5 125V128M268.5 125V128M274.5 125V128M281.5 112V128M288.5 125V128M295.5 125V128M302.5 125V128M309.5 125V128M315.5 122V128M322.5 125V128M329.5 125V128M336.5 125V128M343.5 125V128M350.5 112V128M356.5 125V128M363.5 125V128M370.5 125V128M377.5 125V128M384.5 122V128M391.5 125V128M397.5 125V128M404.5 125V128M411.5 125V128M418.5 112V128M425.5 125V128M432.5 125V128M438.5 125V128M445.5 125V128M452.5 122V128M459.5 125V128M466.5 125V128M473.5 125V128M479.5 125V128M486.5 112V128M493.5 125V128M500.5 125V128M507.5 125V128M514.5 125V128M520.5 122V128M527.5 125V128M534.5 125V128M541.5 125V128M548.5 125V128M555.5 112V128M562.5 125V128M568.5 125V128M575.5 125V128M582.5 125V128M589.5 122V128M596.5 125V128M603.5 125V128M609.5 125V128M616.5 125V128M623.5 112V128M630.5 125V128M637.5 125V128M644.5 125V128M650.5 125V128M657.5 122V128M664.5 125V128M671.5 125V128M678.5 125V128M685.5 125V128M691.5 112V128M698.5 125V128M705.5 125V128M712.5 125V128M719.5 125V128M726.5 122V128M732.5 125V128M739.5 125V128M746.5 125V128M753.5 125V128M760.5 112V128M767.5 125V128M773.5 125V128M780.5 125V128M787.5 125V128M794.5 122V128M801.5 125V128M808.5 125V128M814.5 125V128M821.5 125V128M828.5 112V128M835.5 125V128M842.5 125V128M849.5 125V128M855.5 125V128M862.5 122V128M869.5 125V128M876.5 125V128M883.5 125V128M890.5 125V128M896.5 112V128M903.5 125V128M910.5 125V128M917.5 125V128M924.5 125V128M931.5 122V128M938.5 125V128M944.5 125V128M951.5 125V128M958.5 125V128M965.5 112V128M972.5 125V128M979.5 125V128M985.5 125V128M992.5 125V128M999.5 122V128M1006.5 125V128M1013.5 125V128M1020.5 125V128M1026.5 125V128M1033.5 112V128M1040.5 125V128M1047.5 125V128M1054.5 125V128M1061.5 125V128M1067.5 122V128M1074.5 125V128M1081.5 125V128M1088.5 125V128M1095.5 125V128M1102.5 112V128M1108.5 125V128M1115.5 125V128M1122.5 125V128M1129.5 125V128M1136.5 122V128M1143.5 125V128M1149.5 125V128M1156.5 125V128M1163.5 125V128M1170.5 112V128M1177.5 125V128M1184.5 125V128M1190.5 125V128M1197.5 125V128M1204.5 122V128M1211.5 125V128M1218.5 125V128M1225.5 125V128M1231.5 125V128M1238.5 112V128M1245.5 125V128M1252.5 125V128M1259.5 125V128M1266.5 125V128M1272.5 122V128M1279.5 125V128M1286.5 125V128M1293.5 125V128M1300.5 125V128M1307.5 112V128M1314.5 125V128M1320.5 125V128M1327.5 125V128M1334.5 125V128M1341.5 122V128M1348.5 125V128M1355.5 125V128M1361.5 125V128M1368.5 125V128M1375.5 112V128M1382.5 125V128M1389.5 125V128M1396.5 125V128M1402.5 125V128M1409.5 122V128M1416.5 125V128M1423.5 125V128M1430.5 125V128M1437.5 125V128M1443.5 112V128M1450.5 125V128M1457.5 125V128M1464.5 125V128M1471.5 125V128M1478.5 122V128M1484.5 125V128M1491.5 125V128M1498.5 125V128M1505.5 125V128M1512.5 112V128M1519.5 125V128M1525.5 125V128M1532.5 125V128M1539.5 125V128M1546.5 122V128M1553.5 125V128M1560.5 125V128M1566.5 125V128M1573.5 125V128M1580.5 112V128M1587.5 125V128M1594.5 125V128M1601.5 125V128M1607.5 125V128M1614.5 122V128M1621.5 125V128" stroke="#000" stroke-width="1" fill="none" shape-rendering="crispEdges"/>
<path d="M46 132.5H49M33 139.5H49M46 146.5H49M46 153.5H49M46 159.5H49M46 166.5H49M43 173.5H49M46 180.5H49M46 187.5H49M46 194.5H49M46 200.5H49M33 207.5H49M46 214.5H49M46 221.5H49M46 228.5H49M46 235.5H49M43 241.5H49M46 248.5H49M46 255.5H49M46 262.5H49M46 269.5H49M33 276.5H49M46 282.5H49M46 289.5H49M46 296.5H49M46 303.5H49M43 310.5H49M46 317.5H49M46 323.5H49M46 330.5H49M46 337.5H49M33 344.5H49M46 351.5H49M46 358.5H49M46 364.5H49M46 371.5H49M43 378.5H49M46 385.5H49M46 392.5H49M46 399.5H49M46 405.5H49M33 412.5H49M46 419.5H49M46 426.5H49M46 433.5H49M46 440.5H49M43 446.5H49M46 453.5H49M46 460.5H49M46 467.5H49M46 474.5H49M33 481.5H49M46 488.5H49M46 494.5H49M46 501.5H49M46 508.5H49M43 515.5H49M46 522.5H49M46 529.5H49M46 535.5H49M46 542.5H49M33 549.5H49M46 556.5H49M46 563.5H49M46 570.5H49M46 576.5H49M43 583.5H49M46 590.5H49M46 597.5H49M46 604.5H49M46 611.5H49M33 617.5H49M46 624.5H49M46 631.5H49M46 638.5H49M46 645.5H49M43 652.5H49M46 658.5H49M46 665.5H49M46 672.5H49M46 679.5H49M33 686.5H49M46 693.5H49M46 699.5H49M46 706.5H49M46 713.5H49M43 720.5H49M46 727.5H49M46 734.5H49M46 740.5H49M46 747.5H49M33 754.5H49M46 761.5H49M46 768.5H49M46 775.5H49M46 781.5H49M43 788.5H49M46 795.5H49M46 802.5H49M46 809.5H49M46 816.5H49M33 822.5H49M46 829.5H49M46 836.5H49M46 843.5H49M46 850.5H49M43 857.5H49M46 864.5H49M46 870.5H49M46 877.5H49M46 884.5H49M33 891.5H49M46 898.5H49M46 905.5H49M46 911.5H49M46 918.5H49M43 925.5H49M46 932.5H49M46 939.5H49M46 946.5H49M46 952.5H49M33 959.5H49M46 966.5H49M46 973.5H49M46 980.5H49" stroke="#000" stroke-width="1" fill="none" shape-rendering="crispEdges"/>
<path d="M1610.5 142L1613.5 138.5L1616.5 142" stroke="#606060" stroke-width="1.8" fill="none"/>
<path d="M1610.5 958L1613.5 961.5L1616.5 958" stroke="#606060" stroke-width="1.8" fill="none"/>
<path d="M62 973.5L58.5 976.5L62 979.5" stroke="#606060" stroke-width="1.8" fill="none"/>
<path d="M1595 973.5L1598.5 976.5L1595 979.5" stroke="#606060" stroke-width="1.8" fill="none"/>
<path d="M281.5 141V960M350.5 141V960M418.5 141V960M486.5 141V960M555.5 141V960M623.5 141V960M691.5 141V960M760.5 141V960M828.5 141V960M896.5 141V960M965.5 141V960M1033.5 141V960M1102.5 141V960M1170.5 141V960M1238.5 141V960M1307.5 141V960M1375.5 141V960" stroke="#9c9c9c" stroke-width="1" stroke-dasharray="3 3" fill="none" shape-rendering="crispEdges"/>
<path d="M213 207.5H1442M213 276.5H1442M213 344.5H1442M213 412.5H1442M213 481.5H1442M213 549.5H1442M213 617.5H1442M213 686.5H1442M213 754.5H1442M213 822.5H1442M213 891.5H1442" stroke="#9c9c9c" stroke-width="1" stroke-dasharray="3 3" fill="none" shape-rendering="crispEdges"/>
<rect x="213" y="139" width="1229" height="819" fill="none" stroke="#000" stroke-width="2" shape-rendering="crispEdges"/>
<path d="M214 139.3H242" stroke="#0000ff" stroke-width="3" fill="none"/><path d="M234.6 135L243 139.3L234.6 143.7" stroke="#0000ff" stroke-width="3" fill="none" stroke-linejoin="miter"/><path d="M213.4 140V168" stroke="#0000ff" stroke-width="3" fill="none"/><path d="M209 161.4L213.4 169L217.8 161.4" stroke="#0000ff" stroke-width="3" fill="none" stroke-linejoin="miter"/><rect x="210" y="136" width="6" height="6" fill="#ff0000"/>
<rect x="661.5" y="362.5" width="15" height="15" fill="#00ee00" stroke="#000" stroke-width="1"/>
<defs><path id="dp" d="M-2.14 -1.91C-1.91 -3.05 -1.44 -6.23 -0.76 -8.78C-0.09 -11.32 1.02 -14.50 1.91 -17.18C2.80 -19.85 3.82 -22.71 4.58 -24.81C5.34 -26.91 5.98 -28.56 6.49 -29.77C7.00 -30.98 7.44 -31.68 7.63 -32.06L12.82 -29.01L14.89 -32.44L10.08 -35.50C10.31 -35.88 10.20 -36.39 11.45 -37.79C12.70 -39.19 15.27 -41.73 17.56 -43.89C19.85 -46.06 22.52 -48.66 25.19 -50.76C27.86 -52.86 30.79 -54.77 33.59 -56.49C36.39 -58.21 39.19 -59.67 41.98 -61.07C44.78 -62.47 47.71 -63.96 50.38 -64.89C53.05 -65.81 55.47 -66.22 58.02 -66.64C60.56 -67.06 63.23 -67.32 65.65 -67.40C68.07 -67.49 70.23 -67.40 72.52 -67.18C74.81 -66.95 77.10 -66.79 79.39 -66.03C81.68 -65.27 84.22 -63.74 86.26 -62.60C88.30 -61.45 90.20 -60.37 91.60 -59.16C93.00 -57.95 93.93 -56.74 94.66 -55.34C95.38 -53.94 95.83 -52.29 95.95 -50.76C96.08 -49.24 95.76 -47.71 95.42 -46.18C95.08 -44.66 94.66 -42.94 93.89 -41.60C93.13 -40.27 91.86 -38.99 90.84 -38.17C89.82 -37.34 88.74 -36.98 87.79 -36.64C86.83 -36.30 85.56 -36.20 85.11 -36.11L82.98 -40.84L79.39 -39.92L81.07 -35.50C79.77 -35.47 76.23 -35.18 73.28 -35.34C70.33 -35.51 66.28 -36.18 63.36 -36.49C60.43 -36.79 58.33 -37.09 55.73 -37.18C53.12 -37.26 50.13 -37.49 47.71 -37.02C45.29 -36.55 43.58 -35.43 41.22 -34.35C38.87 -33.27 36.26 -32.12 33.59 -30.53C30.92 -28.94 27.86 -26.91 25.19 -24.81C22.52 -22.71 19.97 -20.23 17.56 -17.94C15.14 -15.65 12.72 -13.23 10.69 -11.07C8.65 -8.91 6.68 -6.62 5.34 -4.96C4.01 -3.31 3.12 -1.78 2.67 -1.15C2.42 -0.87 1.72 0.25 1.15 0.53C0.57 0.81 -0.22 0.75 -0.76 0.53C-1.31 0.32 -1.91 -0.36 -2.14 -0.76C-2.37 -1.17 -2.14 -1.72 -2.14 -1.91Z"/></defs>
<g fill="none" stroke="#c0242a" stroke-width="1" shape-rendering="crispEdges"><use href="#dp" x="687.7" y="442.2"/><use href="#dp" x="675.3" y="485.6"/><use href="#dp" x="673.4" y="521.8"/><use href="#dp" x="670.9" y="555.5"/><use href="#dp" x="685.8" y="590.0"/><use href="#dp" x="682.4" y="624.3"/><use href="#dp" x="679.5" y="659.2"/><use href="#dp" x="678.6" y="693.0"/><use href="#dp" x="680.1" y="727.6"/><use href="#dp" x="776.6" y="440.7"/><use href="#dp" x="793.1" y="509.7"/><use href="#dp" x="791.2" y="545.1"/><use href="#dp" x="789.1" y="577.9"/><use href="#dp" x="786.2" y="612.3"/><use href="#dp" x="783.9" y="646.0"/><use href="#dp" x="781.0" y="681.5"/><use href="#dp" x="861.2" y="437.6"/><use href="#dp" x="891.2" y="470.4"/><use href="#dp" x="889.8" y="504.4"/><use href="#dp" x="887.1" y="539.3"/><use href="#dp" x="886.0" y="572.2"/><use href="#dp" x="884.1" y="607.1"/><use href="#dp" x="885.1" y="642.4"/><use href="#dp" transform="translate(785.5 508.6) rotate(-30.5)"/></g>
<path d="M1907.5 117L1913.5 122M1913.5 117L1907.5 122" stroke="#000" stroke-width="1.8" fill="none"/>
<path d="M1646 299L1642.5 302.5L1646 306" stroke="#606060" stroke-width="1.8" fill="none"/>
<path d="M1893.5 299L1897 302.5L1893.5 306" stroke="#606060" stroke-width="1.8" fill="none"/>
<path d="M1643.5 525V541M1641.5 539L1643.5 541.5L1645.5 539M1643 525.5H1658M1656 523.5L1658.5 525.5L1656 527.5" stroke="#000" stroke-width="1" fill="none"/><rect x="1642" y="524" width="3" height="3" fill="#000080"/>
<rect x="1647.5" y="529.5" width="3" height="3" fill="#00e0e0" stroke="#000" stroke-width="1"/>
<rect x="1647.5" y="535.5" width="3" height="3" fill="#00e0e0" stroke="#000" stroke-width="1"/>
<rect x="1653.5" y="529.5" width="3" height="3" fill="#00e0e0" stroke="#000" stroke-width="1"/>
<rect x="1653.5" y="535.5" width="3" height="3" fill="#00e0e0" stroke="#000" stroke-width="1"/>
<path d="M1908 750.5L1914 755.5M1914 750.5L1908 755.5" stroke="#000" stroke-width="1.8" fill="none"/>
<path d="M1893.5 838.0H1900.5L1897 842.0Z" fill="#000"/>
<path d="M1641.5 867.5L1643.8 870L1648.5 865" stroke="#000" stroke-width="1.8" fill="none"/>
<path d="M1893.5 946.0H1900.5L1897 950.0Z" fill="#000"/>
<path d="M4.5 993.5L9 998M9 993.5L4.5 998" stroke="#000" stroke-width="1.5" fill="none"/>
<path d="M5.5 1006V1013M8.5 1006V1013" stroke="#b0b0b0" stroke-width="1" fill="none"/>
<defs>
<linearGradient id="gNew" x1="0" y1="0" x2="1" y2="1"><stop offset="0.25" stop-color="#ffffff"/><stop offset="1" stop-color="#6cb0e8"/></linearGradient>
<linearGradient id="gFold" x1="0" y1="0" x2="0" y2="1"><stop offset="0" stop-color="#ffe47a"/><stop offset="1" stop-color="#f2bc3c"/></linearGradient>
<linearGradient id="gFold2" x1="0" y1="0" x2="1" y2="1"><stop offset="0" stop-color="#fff0a0"/><stop offset="1" stop-color="#f5c84c"/></linearGradient>
<linearGradient id="gGreen" x1="0" y1="0" x2="1" y2="0"><stop offset="0" stop-color="#2c9c2c"/><stop offset="0.5" stop-color="#7cdc6c"/><stop offset="1" stop-color="#2c9c2c"/></linearGradient>
<radialGradient id="gBall" cx="0.4" cy="0.35" r="0.7"><stop offset="0" stop-color="#8a8a8a"/><stop offset="1" stop-color="#383838"/></radialGradient>
<radialGradient id="gLens" cx="0.35" cy="0.3" r="0.8"><stop offset="0" stop-color="#ffffff"/><stop offset="1" stop-color="#a8c8f0"/></radialGradient>
<radialGradient id="gRed" cx="0.4" cy="0.3" r="0.7"><stop offset="0" stop-color="#ff7050"/><stop offset="0.5" stop-color="#d01010"/><stop offset="1" stop-color="#800000"/></radialGradient>
<radialGradient id="gCam" cx="0.5" cy="0.3" r="0.8"><stop offset="0" stop-color="#ffffff"/><stop offset="1" stop-color="#b4bcc4"/></radialGradient>
<linearGradient id="gSq" x1="0" y1="0" x2="1" y2="1"><stop offset="0" stop-color="#8c8c8c"/><stop offset="1" stop-color="#303030"/></linearGradient>
<linearGradient id="gArr" x1="0" y1="0" x2="1" y2="1"><stop offset="0" stop-color="#ffffff"/><stop offset="1" stop-color="#90d8a0"/></linearGradient>
<linearGradient id="gPtr" x1="0" y1="0" x2="1" y2="1"><stop offset="0" stop-color="#f0f0f8"/><stop offset="1" stop-color="#9090b0"/></linearGradient>
</defs>
<path d="M14.5 49.5H27.5L32.5 54.5V71.5H14.5Z" fill="url(#gNew)" stroke="#5a78b0" stroke-width="1"/><path d="M27.5 49.5V54.5H32.5Z" fill="#5a90d8" stroke="#5a78b0" stroke-width="1"/>
<path d="M42.5 70V53L44.5 50.5H49.5L51 52.5H59.5V60H48L44 71.5Z" fill="url(#gFold)" stroke="#c89a24" stroke-width="1"/><path d="M44 71.5L46.8 59.5L52 59L55 55.5H64.5L62 65L59.5 68.8Z" fill="url(#gFold2)" stroke="#c89a24" stroke-width="1"/>
<path d="M74 50.5Q74 49 75.5 49H93.5Q95 49 95 50.5V69.5Q95 70.8 93.5 70.8H75.5Q74 70.8 74 69.5Z" fill="#3a3aac"/><rect x="77.5" y="49" width="13" height="10.5" fill="#ffffff"/><path d="M80 51.5H88.5M80 54.5H88.5M80 57.5H88.5" stroke="#b0b0b0" stroke-width="1"/><rect x="80" y="63" width="10" height="7.8" fill="#e8e8f0"/><rect x="81.3" y="64" width="3" height="5.5" fill="#181860"/>
<path d="M118.2 48.2H125.6V54.5H129L122 61.5L115 54.5H118.2Z" fill="url(#gGreen)" stroke="#1c7c1c" stroke-width="1"/>
<rect x="113.5" y="59.5" width="17.5" height="12.5" fill="#fff" stroke="#8c8c8c" stroke-width="1"/><rect x="115.5" y="61.5" width="13.5" height="8.5" fill="#d4e6f8"/><path d="M115.5 70.0V67.5L119.5 64.0L122.5 67.0L125.0 65.5L129.0 68.5V70.0Z" fill="#3c5888"/>
<path d="M118.8 57L122 60.5L125.2 57Z" fill="#5cc45c"/>
<rect x="142.5" y="48.5" width="17.5" height="12.5" fill="#fff" stroke="#8c8c8c" stroke-width="1"/><rect x="144.5" y="50.5" width="13.5" height="8.5" fill="#d4e6f8"/><path d="M144.5 59.0V56.5L148.5 53.0L151.5 56.0L154.0 54.5L158.0 57.5V59.0Z" fill="#3c5888"/>
<path d="M147.5 71.5H154.5V66.5H158L151 59.5L144 66.5H147.5Z" fill="url(#gGreen)" stroke="#1c7c1c" stroke-width="1"/>
<circle cx="187.9" cy="60.4" r="9.6" fill="url(#gBall)" stroke="#181818" stroke-width="1.2"/>
<path d="M193.1 58.9H187.4V55.8L182.70000000000002 60.4L187.4 65V61.9H193.1Z" fill="#dcdcdc"/>
<circle cx="218.7" cy="60.4" r="9.6" fill="url(#gBall)" stroke="#181818" stroke-width="1.2"/>
<path d="M213.5 58.9H219.2V55.8L223.89999999999998 60.4L219.2 65V61.9H213.5Z" fill="#dcdcdc"/>
<path d="M258.7 62.300000000000004L265.8 68.9" stroke="#a07a20" stroke-width="3.4" stroke-linecap="round"/><path d="M259.0 62.6L265.8 68.9" stroke="#f0c840" stroke-width="1.7" stroke-linecap="round"/>
<circle cx="253.5" cy="57.1" r="6" fill="url(#gLens)" stroke="#6468a8" stroke-width="1.4"/>
<path d="M249.5 57.1H257.5M253.5 53.1V61.1" stroke="#28488c" stroke-width="1.1"/><path d="M249.2 57.1l1.8 -1.6v3.2zM257.8 57.1l-1.8 -1.6v3.2zM253.5 52.800000000000004l-1.6 1.8h3.2zM253.5 61.4l-1.6 -1.8h3.2z" fill="#28488c"/>
<path d="M290.9 62.300000000000004L298.0 68.9" stroke="#a07a20" stroke-width="3.4" stroke-linecap="round"/><path d="M291.2 62.6L298.0 68.9" stroke="#f0c840" stroke-width="1.7" stroke-linecap="round"/>
<circle cx="285.7" cy="57.1" r="6" fill="url(#gLens)" stroke="#6468a8" stroke-width="1.4"/>
<path d="M282.5 57.1H288.9M285.7 53.9V60.300000000000004" stroke="#28488c" stroke-width="2"/>
<path d="M321.7 62.300000000000004L328.8 68.9" stroke="#a07a20" stroke-width="3.4" stroke-linecap="round"/><path d="M322.0 62.6L328.8 68.9" stroke="#f0c840" stroke-width="1.7" stroke-linecap="round"/>
<circle cx="316.5" cy="57.1" r="6" fill="url(#gLens)" stroke="#6468a8" stroke-width="1.4"/>
<path d="M313.3 57.1H319.7" stroke="#28488c" stroke-width="2"/>
<path d="M351.8 62.300000000000004L358.90000000000003 68.9" stroke="#a07a20" stroke-width="3.4" stroke-linecap="round"/><path d="M352.1 62.6L358.90000000000003 68.9" stroke="#f0c840" stroke-width="1.7" stroke-linecap="round"/>
<circle cx="346.6" cy="57.1" r="6" fill="url(#gLens)" stroke="#6468a8" stroke-width="1.4"/>
<path d="M344.1 53.6H347.6L349.6 55.6V60.6H344.1Z" fill="#e8f0ff" stroke="#28488c" stroke-width="1.1"/>
<path d="M384.09999999999997 62.300000000000004L391.2 68.9" stroke="#505050" stroke-width="3.2" stroke-linecap="round"/><path d="M384.09999999999997 62.300000000000004L391.2 68.9" stroke="#909090" stroke-width="1.2" stroke-linecap="round"/>
<circle cx="378.9" cy="57.1" r="6" fill="#909090" stroke="#505050" stroke-width="1.5"/>
<rect x="375.29999999999995" y="53.5" width="1.2" height="1.2" fill="#404040"/><rect x="375.29999999999995" y="56.5" width="1.2" height="1.2" fill="#404040"/><rect x="375.29999999999995" y="59.5" width="1.2" height="1.2" fill="#404040"/><rect x="378.29999999999995" y="53.5" width="1.2" height="1.2" fill="#404040"/><rect x="378.29999999999995" y="56.5" width="1.2" height="1.2" fill="#404040"/><rect x="378.29999999999995" y="59.5" width="1.2" height="1.2" fill="#404040"/><rect x="381.29999999999995" y="53.5" width="1.2" height="1.2" fill="#404040"/><rect x="381.29999999999995" y="56.5" width="1.2" height="1.2" fill="#404040"/><rect x="381.29999999999995" y="59.5" width="1.2" height="1.2" fill="#404040"/>
<path d="M413.7 62.300000000000004L420.8 68.9" stroke="#a07a20" stroke-width="3.4" stroke-linecap="round"/><path d="M414.0 62.6L420.8 68.9" stroke="#f0c840" stroke-width="1.7" stroke-linecap="round"/>
<circle cx="408.5" cy="57.1" r="6" fill="url(#gLens)" stroke="#6468a8" stroke-width="1.4"/>
<path d="M405.7 60.1L408.5 53.6L411.3 60.1M406.8 57.9H410.2" fill="none" stroke="#28488c" stroke-width="1.5"/>
<path d="M445.7 62.300000000000004L452.8 68.9" stroke="#a07a20" stroke-width="3.4" stroke-linecap="round"/><path d="M446.0 62.6L452.8 68.9" stroke="#f0c840" stroke-width="1.7" stroke-linecap="round"/>
<circle cx="440.5" cy="57.1" r="6" fill="url(#gLens)" stroke="#6468a8" stroke-width="1.4"/>
<path d="M437.0 56.1A4 4 0 0 1 440.0 53.300000000000004" fill="none" stroke="#fff" stroke-width="1.3"/>
<rect x="473.6" y="53.6" width="12.8" height="11.6" fill="#c6c6c6"/><path d="M473.6 65.2V53.6H486.4" fill="none" stroke="#0000c0" stroke-width="1.3"/><path d="M486.4 53.6V65.2H473.6" fill="none" stroke="#000" stroke-width="1.3"/><path d="M473.6 53.6H486.4" stroke="#000" stroke-width="1.3"/><path d="M473.6 53.6V60" stroke="#0000c0" stroke-width="1.3"/>
<rect x="484.5" y="52.1" width="2.2" height="2.2" fill="#e01010" transform="rotate(45 485.6 53.2)"/>
<rect x="472.29999999999995" y="54.3" width="2.2" height="2.2" fill="#e01010" transform="rotate(45 473.4 55.4)"/>
<rect x="485.9" y="62.4" width="2.2" height="2.2" fill="#e01010" transform="rotate(45 487 63.5)"/>
<rect x="473.9" y="64.5" width="2.2" height="2.2" fill="#e01010" transform="rotate(45 475 65.6)"/>
<path d="M505 56.6H510L513 58" stroke="#606060" stroke-width="1" fill="none"/><rect x="503.5" y="55.4" width="2.6" height="2.6" fill="#fff" stroke="#000" stroke-width="1"/><circle cx="513.5" cy="61.5" r="5" fill="#a0a0a0" stroke="#000" stroke-width="1.2" stroke-dasharray="2 1"/><rect x="512.3" y="60.5" width="2.6" height="2.6" fill="#fff" stroke="#000" stroke-width="1"/>
<path d="M535 66.5C534.5 62 538 59.5 541 59" stroke="#000" stroke-width="1.3" fill="none"/><path d="M536.5 66.8L545.5 56.5" stroke="#000" stroke-width="4.2" stroke-linecap="round"/><path d="M536.8 66.5L545 57" stroke="#a8a020" stroke-width="2.4" stroke-linecap="round"/><path d="M538 65L544 58" stroke="#e8e050" stroke-width="0.8"/><path d="M544.5 57.5L546.8 54.8" stroke="#808080" stroke-width="2.4"/><path d="M549.5 54C550.5 58 548.5 62 545 62C543.5 62 542.8 61.3 542.5 60.5" stroke="#000" stroke-width="1.3" fill="none"/>
<rect x="568.1" y="51" width="21.9" height="16.7" fill="#000"/><rect x="570" y="53" width="18" height="11" fill="#28a8dc"/><path d="M576 53H578.5L580.5 64H578Z" fill="#7cd0f0"/><rect x="585.5" y="65.4" width="3" height="1" fill="#c0c0c0"/><path d="M576.3 67.7H582.2L583 70H586.5L587.2 72H573L573.7 70H575.5Z" fill="#000"/>
<circle cx="610.9" cy="55.7" r="5.7" fill="#48e048" opacity="0.75"/><circle cx="610.9" cy="55.7" r="4.2" fill="url(#gRed)"/>
<rect x="614" y="60" width="11.7" height="11.3" fill="#ffee20"/><rect x="616.3" y="62.2" width="7" height="7" fill="#f05040"/>
<rect x="605.0" y="50.1" width="1.8" height="1.8" fill="#000"/><rect x="615.1" y="50.1" width="1.8" height="1.8" fill="#000"/><rect x="625.2" y="50.1" width="1.8" height="1.8" fill="#000"/><rect x="605.0" y="61.1" width="1.8" height="1.8" fill="#000"/><rect x="625.2" y="60.1" width="1.8" height="1.8" fill="#000"/><rect x="605.0" y="70.4" width="1.8" height="1.8" fill="#000"/><rect x="615.1" y="70.4" width="1.8" height="1.8" fill="#000"/><rect x="625.2" y="70.4" width="1.8" height="1.8" fill="#000"/>
<circle cx="641.9" cy="55.7" r="5.7" fill="#48e048" opacity="0.75"/><circle cx="641.9" cy="55.7" r="4.2" fill="url(#gRed)"/>
<rect x="645" y="60" width="11.7" height="11.3" fill="#ffee20"/><rect x="647.3" y="62.2" width="7" height="7" fill="#f05040"/>
<rect x="636.0" y="50.1" width="1.8" height="1.8" fill="#000"/><rect x="646.1" y="50.1" width="1.8" height="1.8" fill="#000"/><rect x="656.2" y="50.1" width="1.8" height="1.8" fill="#000"/><rect x="636.0" y="61.1" width="1.8" height="1.8" fill="#000"/><rect x="656.2" y="60.1" width="1.8" height="1.8" fill="#000"/><rect x="636.0" y="70.4" width="1.8" height="1.8" fill="#000"/><rect x="646.1" y="70.4" width="1.8" height="1.8" fill="#000"/><rect x="656.2" y="70.4" width="1.8" height="1.8" fill="#000"/>
<circle cx="672.8" cy="55.9" r="5.7" fill="#48e048" opacity="0.75"/><circle cx="672.8" cy="55.9" r="4.2" fill="url(#gRed)"/>
<rect x="676.4" y="60" width="11.7" height="11.3" fill="#ffee20"/><rect x="678.6999999999999" y="62.2" width="7" height="7" fill="#f05040"/>
<rect x="667.0" y="50.1" width="1.8" height="1.8" fill="#000"/><rect x="672.1" y="50.1" width="1.8" height="1.8" fill="#000"/><rect x="677.1" y="50.1" width="1.8" height="1.8" fill="#000"/><rect x="667.0" y="55.1" width="1.8" height="1.8" fill="#000"/><rect x="677.1" y="55.1" width="1.8" height="1.8" fill="#000"/><rect x="667.0" y="61.1" width="1.8" height="1.8" fill="#000"/><rect x="672.1" y="61.1" width="1.8" height="1.8" fill="#000"/><rect x="677.1" y="61.1" width="1.8" height="1.8" fill="#000"/><rect x="680.1" y="58.1" width="1.8" height="1.8" fill="#000"/><rect x="687.1" y="58.1" width="1.8" height="1.8" fill="#000"/><rect x="674.1" y="65.1" width="1.8" height="1.8" fill="#000"/><rect x="687.1" y="64.1" width="1.8" height="1.8" fill="#000"/><rect x="674.1" y="70.4" width="1.8" height="1.8" fill="#000"/><rect x="680.1" y="70.4" width="1.8" height="1.8" fill="#000"/><rect x="687.1" y="70.4" width="1.8" height="1.8" fill="#000"/>
<path d="M710.8 66.3C711 63 713 59.5 715.3 58.8C718 58 719.5 62.5 722 62.3C724.5 62 726 58 726 54.3" stroke="#000" stroke-width="1.5" fill="none"/><path d="M710.8 66.5V64.5" stroke="#000" stroke-width="2"/>
<rect x="773.8" y="53.8" width="13.5" height="12.5" fill="none" stroke="#000" stroke-width="1.3"/>
<path d="M811.6 55.5L816.5 63.5H806.5" fill="none" stroke="#0000c0" stroke-width="1.3"/>
<rect x="809.6" y="53.3" width="4" height="4" fill="#40d060" stroke="#000" stroke-width="1.1"/>
<rect x="804.3" y="61.5" width="4" height="4" fill="#40d060" stroke="#000" stroke-width="1.1"/>
<rect x="814.5" y="61.5" width="4" height="4" fill="#40d060" stroke="#000" stroke-width="1.1"/>
<path d="M836.4 52.3V66.7M848.5 52.3V66.7" stroke="#000" stroke-width="1.2"/><rect x="835.3" y="57.4" width="2.2" height="2.2" fill="#fff" stroke="#000" stroke-width="1"/><rect x="835.3" y="62.4" width="2.2" height="2.2" fill="#fff" stroke="#000" stroke-width="1"/><path d="M839.3 59.5H843.5V58L846.7 60.8L843.5 63.6V62.2H839.3Z" fill="#808080" stroke="#000" stroke-width="0.9"/><circle cx="848.5" cy="60.8" r="1.3" fill="#fff" stroke="#000" stroke-width="1"/>
<path d="M867.3 52.3V66.7M879.5 52.3V66.7" stroke="#000" stroke-width="1.2"/><path d="M868.3 53L870.5 55.5M870.5 53L868.3 55.5" stroke="#000" stroke-width="0.8"/><path d="M869.8 59.5H874.5V58L877.8 60.8L874.5 63.6V62.2H869.8Z" fill="#808080" stroke="#000" stroke-width="0.9"/>
<path d="M899.5 56.5V54.5Q899.5 52.6 901.5 52.6H907.5Q909.5 52.6 909.5 54.5V56.5L913.3 60.3V64.5L911 67.3H898L895.7 64.5V60.3Z" fill="#fff" stroke="#000" stroke-width="1.3"/><path d="M901.8 57.2V55H907.2V57.2L910.8 61V63.8L909.8 65H899.2L898.2 63.8V61Z" fill="#f0f0f0" stroke="#000" stroke-width="1"/><rect x="894.2" y="60.3" width="1.6" height="4.8" fill="#000"/><rect x="913.2" y="60.3" width="1.6" height="4.8" fill="#000"/>
<rect x="927.9" y="53" width="14.5" height="14.2" fill="#fff" stroke="#000" stroke-width="1.4"/>
<rect x="929.7" y="54.5" width="2.4" height="2.4" fill="#b01010"/><path d="M931.3 56.2L934.5 53.2" stroke="#b01010" stroke-width="0.9"/><path d="M934.5 56.800000000000004H940.5" stroke="#e0e0e8" stroke-width="0.8"/>
<rect x="929.7" y="58.5" width="2.4" height="2.4" fill="#1010a0"/><path d="M931.3 60.2L934.5 57.2" stroke="#1010a0" stroke-width="0.9"/><path d="M934.5 60.800000000000004H940.5" stroke="#e0e0e8" stroke-width="0.8"/>
<rect x="929.7" y="62.5" width="2.4" height="2.4" fill="#10a010"/><path d="M931.3 64.2L934.5 61.2" stroke="#10a010" stroke-width="0.9"/><path d="M934.5 64.8H940.5" stroke="#e0e0e8" stroke-width="0.8"/>
<path d="M960 55.8Q960 54.3 961.5 54.3H982.5Q984 54.3 984 55.8V65.2H960Z" fill="#000"/><path d="M962 65.2H965.5L963.8 67.8ZM978.5 65.2H982L980.3 67.8Z" fill="#000"/><circle cx="978.5" cy="59.6" r="2.6" fill="none" stroke="#fff" stroke-width="1.6"/><rect x="963" y="57.5" width="1.1" height="5" fill="#d0d0d0"/><rect x="965.1" y="57.5" width="1.1" height="5" fill="#d0d0d0"/>
<path d="M993.6 69.3L1006.8 54" stroke="#e00010" stroke-width="2" stroke-linecap="round"/><path d="M1002 53.6H1007.6V58.8" stroke="#e00010" stroke-width="1.4" fill="none"/><path d="M1006.2 51.4H1012.8M1009.5 48.1V54.7" stroke="#602080" stroke-width="1.1"/>
<rect x="1029.8" y="49.7" width="8.6" height="20.6" fill="#fff" stroke="#000" stroke-width="1.3"/><path d="M1030.4 52.5H1033M1030.4 55.5H1035M1030.4 58.5H1033M1030.4 61.5H1035M1030.4 64.5H1033M1030.4 67.5H1035" stroke="#0000a0" stroke-width="1"/>
<path d="M253 92.5V85.5Q253 84 251.5 84H243.2Q241.7 84 241.7 85.5V88.5L243.2 89.6" stroke="#000" stroke-width="1.7" fill="none"/><rect x="239" y="92.4" width="14.9" height="10.1" fill="#000"/><rect x="240.8" y="94.3" width="11.3" height="6.5" rx="1.8" fill="none" stroke="#9a9a9a" stroke-width="0.9"/>
<rect x="260.7" y="84.6" width="17.7" height="17.5" fill="#fff" stroke="#000" stroke-width="1.2"/><path d="M266.6 84.6V102M260.7 90.1H278.4" stroke="#000" stroke-width="1.2"/><rect x="268" y="92.2" width="4.3" height="3.8" fill="#000"/><rect x="272.3" y="92.2" width="0.8" height="4.6" fill="#a0a0a0"/><rect x="268" y="96" width="5" height="0.8" fill="#a0a0a0"/>
<path d="M313.3 92.2A7.1 7.1 0 1 0 311.5 98.7" stroke="#000" stroke-width="1.2" fill="none"/><path d="M310.3 92L317.2 92L313.8 98Z" fill="#000"/>
<path d="M505.4 85.4V100.8" stroke="#000" stroke-width="1.4"/><rect x="506.4" y="86.6" width="8.6" height="4.8" stroke="#000" fill="none" stroke-width="1.2"/><path d="M506 96.5L512 93.3L518 96.5L512 99.7Z" stroke="#000" fill="none" stroke-width="1.1"/>
<path d="M547.5 85.4V100.8" stroke="#000" stroke-width="1.4"/><rect x="538" y="86.6" width="8.6" height="4.8" stroke="#000" fill="none" stroke-width="1.2"/><path d="M535 96.5L541 93.3L547 96.5L541 99.7Z" stroke="#000" fill="none" stroke-width="1.1"/>
<path d="M565.1 87.5H581" stroke="#000" stroke-width="1.4"/><rect x="566.5" y="88.4" width="4.8" height="8" stroke="#000" fill="none" stroke-width="1.2"/><path d="M576.6 88L579.9 94L576.6 100L573.3 94Z" stroke="#000" fill="none" stroke-width="1.1"/>
<path d="M596 98.2H612" stroke="#000" stroke-width="1.4"/><rect x="598.5" y="89.6" width="4.8" height="8" stroke="#000" fill="none" stroke-width="1.2"/><path d="M607.6 86L610.9 92L607.6 98L604.3 92Z" stroke="#000" fill="none" stroke-width="1.1"/>
<path d="M627 92.4H642.8" stroke="#000" stroke-width="1.1"/><rect x="628.4" y="88.6" width="4.6" height="7.8" stroke="#000" fill="none" stroke-width="1.2"/><path d="M638.5 86.2L641.8 92.4L638.5 98.6L635.2 92.4Z" stroke="#000" fill="none" stroke-width="1.1"/>
<path d="M665.4 85.4V100.8" stroke="#000" stroke-width="1.1"/><rect x="661.5" y="86.6" width="7.8" height="4.8" stroke="#000" fill="none" stroke-width="1.2"/><path d="M659.1 96.3L665.4 93L671.7 96.3L665.4 99.6Z" stroke="#000" fill="none" stroke-width="1.1"/>
<path d="M695.2 89.6H698V97.6H695.2M698 93.5H707.5M710.4 89.6H707.5V97.6H710.4" stroke="#000" fill="none" stroke-width="1.3"/><path d="M698.5 93.5l1.8 -1.3v2.6zM707 93.5l-1.8 -1.3v2.6z" fill="#000"/>
<path d="M730.5 85.5V88H738.5V85.5M734.5 88V97.6M730.5 100V97.6H738.5V100" stroke="#000" fill="none" stroke-width="1.3"/><path d="M734.5 88.5l-1.3 1.8h2.6zM734.5 97l-1.3 -1.8h2.6z" fill="#000"/>
<rect x="757.9" y="89.9" width="14.3" height="7.2" stroke="#000" fill="none" stroke-width="1.5"/><path d="M758 93.5H772" stroke="#000" stroke-width="1.5"/>
<rect x="791.9" y="86.9" width="7.3" height="12.2" stroke="#000" fill="none" stroke-width="1.5"/><path d="M795.5 87V99" stroke="#000" stroke-width="1.5"/>
<rect x="820.8" y="86.9" width="13.4" height="12.9" stroke="#000" fill="none" stroke-width="1.5"/><path d="M827.5 87V100M821 93.5H834" stroke="#000" stroke-width="1.3"/>
<path d="M871.9 86.3H857.4V100.8" stroke="#000" fill="none" stroke-width="1.3"/><rect x="856.1" y="85.0" width="2.6" height="2.6" fill="#000"/><path d="M868.6999999999999 97.6L861.0 89.89999999999999M864.4 89.89999999999999H861.0V93.3" stroke="#000" fill="none" stroke-width="1"/>
<path d="M887.0 86.3H901.5V100.8" stroke="#000" fill="none" stroke-width="1.3"/><rect x="900.2" y="85.0" width="2.6" height="2.6" fill="#000"/><path d="M890.2 97.6L897.9 89.89999999999999M894.5 89.89999999999999H897.9V93.3" stroke="#000" fill="none" stroke-width="1"/>
<path d="M918.0 99.5H932.5V85.0" stroke="#000" fill="none" stroke-width="1.3"/><rect x="931.2" y="98.2" width="2.6" height="2.6" fill="#000"/><path d="M921.2 88.2L928.9 95.9M925.5 95.9H928.9V92.5" stroke="#000" fill="none" stroke-width="1"/>
<path d="M965.0 99.5H950.5V85.0" stroke="#000" fill="none" stroke-width="1.3"/><rect x="949.2" y="98.2" width="2.6" height="2.6" fill="#000"/><path d="M961.8 88.2L954.1 95.9M957.5 95.9H954.1V92.5" stroke="#000" fill="none" stroke-width="1"/>
<rect x="981.8" y="87" width="12.2" height="11.8" stroke="#000" fill="none" stroke-width="1.5"/><path d="M988.5 85V101M980 93.5H996" stroke="#707070" stroke-width="1"/><circle cx="988.5" cy="93.5" r="1.5" fill="#303030"/><path d="M988.5 93.5L992.5 89.5" stroke="#303030" stroke-width="1"/>
<path d="M1017.5 86V101M1018 93.4H1034M1020.5 91L1018 93.4L1020.5 95.8" stroke="#000" fill="none" stroke-width="1.2"/>
<path d="M1064.4 86V101M1047 93.4H1064M1061.5 91L1064 93.4L1061.5 95.8" stroke="#000" fill="none" stroke-width="1.2"/>
<path d="M1081 84.4H1096M1088.4 85V101.8M1086 87.6L1088.4 85L1090.8 87.6" stroke="#000" fill="none" stroke-width="1.2"/>
<path d="M1111 101.4H1126M1118.5 84V101M1116.1 98.4L1118.5 101L1120.9 98.4" stroke="#000" fill="none" stroke-width="1.2"/>
<path d="M9.5 124.7V139.5L13 136.5L16.5 143.5L20.5 141.5L17.3 135L22.8 134.3Z" fill="url(#gArr)" stroke="#3c8c4c" stroke-width="1.2" stroke-linejoin="round"/>
<path d="M4.5 160C8 157.5 14 155 24 154.6" stroke="#808080" stroke-width="1.3" fill="none"/><path d="M11.5 158L24 168L18.3 169.7L13 173.5L11.2 172Z" fill="url(#gPtr)" stroke="#383838" stroke-width="1.2" stroke-linejoin="round"/><rect x="10" y="155" width="3" height="3" fill="#d8d8ff" stroke="#5858b8" stroke-width="1"/>
<path d="M7.5 208.5L22.5 193.5" stroke="#707070" stroke-width="1.5"/><rect x="6.5" y="207.5" width="2" height="2" fill="#fff" stroke="#2080b0" stroke-width="1"/><rect x="21.5" y="192.5" width="2" height="2" fill="#fff" stroke="#2080b0" stroke-width="1"/>
<path d="M6.5 241L15.5 232L23.5 224" stroke="#707070" stroke-width="1.5" fill="none"/><rect x="5.5" y="240" width="2" height="2" fill="#fff" stroke="#2080b0" stroke-width="1"/><rect x="14.5" y="231" width="2" height="2" fill="#fff" stroke="#2080b0" stroke-width="1"/><rect x="22.5" y="223" width="2" height="2" fill="#fff" stroke="#2080b0" stroke-width="1"/>
<path d="M7.5 256.5L16.5 260.5Q21.5 262.5 23.5 271.5M5.5 268.5L16.5 260.5L24.5 265.5" stroke="#808080" stroke-width="1.5" fill="none"/><rect x="6.5" y="255.5" width="2" height="2" fill="#fff" stroke="#2080b0" stroke-width="1"/><rect x="15.5" y="259.5" width="2" height="2" fill="#fff" stroke="#2080b0" stroke-width="1"/><rect x="4.5" y="267.5" width="2" height="2" fill="#fff" stroke="#2080b0" stroke-width="1"/><rect x="23.5" y="264.5" width="2" height="2" fill="#fff" stroke="#2080b0" stroke-width="1"/><rect x="22.5" y="270.5" width="2" height="2" fill="#fff" stroke="#2080b0" stroke-width="1"/>
<rect x="5.5" y="285.5" width="19" height="18" rx="1" fill="#ffd700" stroke="#b89810" stroke-width="1"/><rect x="4.5" y="284.5" width="2" height="2" fill="#fff" stroke="#6080d0" stroke-width="1"/><rect x="23.5" y="284.5" width="2" height="2" fill="#fff" stroke="#6080d0" stroke-width="1"/><rect x="4.5" y="302.5" width="2" height="2" fill="#fff" stroke="#6080d0" stroke-width="1"/><rect x="23.5" y="302.5" width="2" height="2" fill="#fff" stroke="#6080d0" stroke-width="1"/>
<path d="M5.2 325.5C5.2 321.5 10 319.8 15.5 319.8C21 319.8 25.8 321.5 25.8 325.5C25.8 328 22 331.3 19.5 331.3H11.5C9 331.3 5.2 328 5.2 325.5Z" fill="#ffd700" stroke="#b89810" stroke-width="1"/><path d="M12.5 330.3H18.5" stroke="#a08830" stroke-width="1"/><rect x="14.5" y="319" width="2" height="2" fill="#fff" stroke="#4080c0" stroke-width="1"/>
<path d="M13.2 350.2Q13 348.3 11 348.5Q9.2 348.8 9.2 351V353.3H7V356H9.2V364.8H12.2V356H14V353.3H12.2V351.5Q12.2 350.6 13.2 351Z" fill="#f0d040" stroke="#504010" stroke-width="0.9"/><path d="M15.5 346.5H24V349H21.2V362.3H24V364.8H15.5V362.3H18.3V349H15.5Z" fill="#2088b8" stroke="#103850" stroke-width="0.9"/>
<path d="M16 380.5V395.5M8.5 388H23.5M10.7 382.7L21.3 393.3M21.3 382.7L10.7 393.3" stroke="#000" stroke-width="1"/><circle cx="16" cy="388" r="1.6" fill="#e0e0ff" stroke="#5050c0" stroke-width="0.8"/>
<ellipse cx="16" cy="433.5" rx="8.5" ry="3.3" fill="#f0a030"/><ellipse cx="16" cy="432.3" rx="7" ry="2" fill="#f8c060"/><circle cx="17.2" cy="422.5" r="9" fill="url(#gCam)"/><circle cx="10.8" cy="423" r="5.4" fill="#f0a030"/><circle cx="8" cy="423" r="3.6" fill="#2870b8"/><circle cx="7" cy="421.8" r="1.2" fill="#80c0f0"/>
<rect x="3.8" y="450.8" width="22.5" height="21.2" fill="#fff" stroke="#183870" stroke-width="1.6"/><rect x="6.2" y="452.59999999999997" width="1.6" height="1.6" fill="#2020c0"/><rect x="6.2" y="456.59999999999997" width="1.6" height="1.6" fill="#2020c0"/><rect x="6.2" y="460.59999999999997" width="1.6" height="1.6" fill="#2020c0"/><rect x="6.2" y="464.59999999999997" width="1.6" height="1.6" fill="#2020c0"/><rect x="6.2" y="468.59999999999997" width="1.6" height="1.6" fill="#2020c0"/><rect x="10.2" y="452.59999999999997" width="1.6" height="1.6" fill="#2020c0"/><rect x="10.2" y="456.59999999999997" width="1.6" height="1.6" fill="#2020c0"/><rect x="10.2" y="460.59999999999997" width="1.6" height="1.6" fill="#2020c0"/><rect x="10.2" y="464.59999999999997" width="1.6" height="1.6" fill="#2020c0"/><rect x="10.2" y="468.59999999999997" width="1.6" height="1.6" fill="#2020c0"/><rect x="14.2" y="452.59999999999997" width="1.6" height="1.6" fill="#2020c0"/><rect x="14.2" y="456.59999999999997" width="1.6" height="1.6" fill="#2020c0"/><rect x="14.2" y="460.59999999999997" width="1.6" height="1.6" fill="#2020c0"/><rect x="14.2" y="464.59999999999997" width="1.6" height="1.6" fill="#2020c0"/><rect x="14.2" y="468.59999999999997" width="1.6" height="1.6" fill="#2020c0"/><rect x="18.2" y="452.59999999999997" width="1.6" height="1.6" fill="#2020c0"/><rect x="18.2" y="456.59999999999997" width="1.6" height="1.6" fill="#2020c0"/><rect x="18.2" y="460.59999999999997" width="1.6" height="1.6" fill="#2020c0"/><rect x="18.2" y="464.59999999999997" width="1.6" height="1.6" fill="#2020c0"/><rect x="18.2" y="468.59999999999997" width="1.6" height="1.6" fill="#2020c0"/><rect x="22.2" y="452.59999999999997" width="1.6" height="1.6" fill="#2020c0"/><rect x="22.2" y="456.59999999999997" width="1.6" height="1.6" fill="#2020c0"/><rect x="22.2" y="460.59999999999997" width="1.6" height="1.6" fill="#2020c0"/><rect x="22.2" y="464.59999999999997" width="1.6" height="1.6" fill="#2020c0"/><rect x="22.2" y="468.59999999999997" width="1.6" height="1.6" fill="#2020c0"/>
<path d="M6.5 491L23.5 507M23.5 491L6.5 507" stroke="#9c9c9c" stroke-width="7" stroke-linecap="square"/><path d="M6.5 491L23.5 507M23.5 491L6.5 507" stroke="#383838" stroke-width="4.2" stroke-linecap="round"/>
<path d="M16 525V546.5" stroke="#101010" stroke-width="1.5"/><path d="M5.5 544H13.5V529Z" fill="#909090" stroke="#303030" stroke-width="1"/><path d="M26.5 544H18.5V529Z" fill="#909090" stroke="#303030" stroke-width="1"/>
<path d="M5 567H27" stroke="#101010" stroke-width="1.5"/><path d="M9.5 564H24.5V557Z" fill="#909090" stroke="#303030" stroke-width="1"/><path d="M9.5 570H24.5V577Z" fill="#909090" stroke="#303030" stroke-width="1"/>
<rect x="9" y="586.5" width="14" height="13.5" fill="url(#gSq)"/><path d="M4.5 587V607H26M23.5 604.5L26.2 607L23.5 609.5" stroke="#202020" stroke-width="1.6" fill="none"/>
<rect x="6.5" y="619.5" width="4.5" height="4.5" fill="#c8c8c8" stroke="#202020" stroke-width="1"/><rect x="6.5" y="626.5" width="4.5" height="4.5" fill="#c8c8c8" stroke="#202020" stroke-width="1"/><rect x="6.5" y="633.5" width="4.5" height="4.5" fill="#c8c8c8" stroke="#202020" stroke-width="1"/><rect x="13.5" y="619.5" width="4.5" height="4.5" fill="#c8c8c8" stroke="#202020" stroke-width="1"/><rect x="13.5" y="626.5" width="4.5" height="4.5" fill="#c8c8c8" stroke="#202020" stroke-width="1"/><rect x="13.5" y="633.5" width="4.5" height="4.5" fill="#c8c8c8" stroke="#202020" stroke-width="1"/><rect x="20.5" y="619.5" width="4.5" height="4.5" fill="#c8c8c8" stroke="#202020" stroke-width="1"/><rect x="20.5" y="626.5" width="4.5" height="4.5" fill="#c8c8c8" stroke="#202020" stroke-width="1"/><rect x="20.5" y="633.5" width="4.5" height="4.5" fill="#c8c8c8" stroke="#202020" stroke-width="1"/>
</svg>
</body></html>
